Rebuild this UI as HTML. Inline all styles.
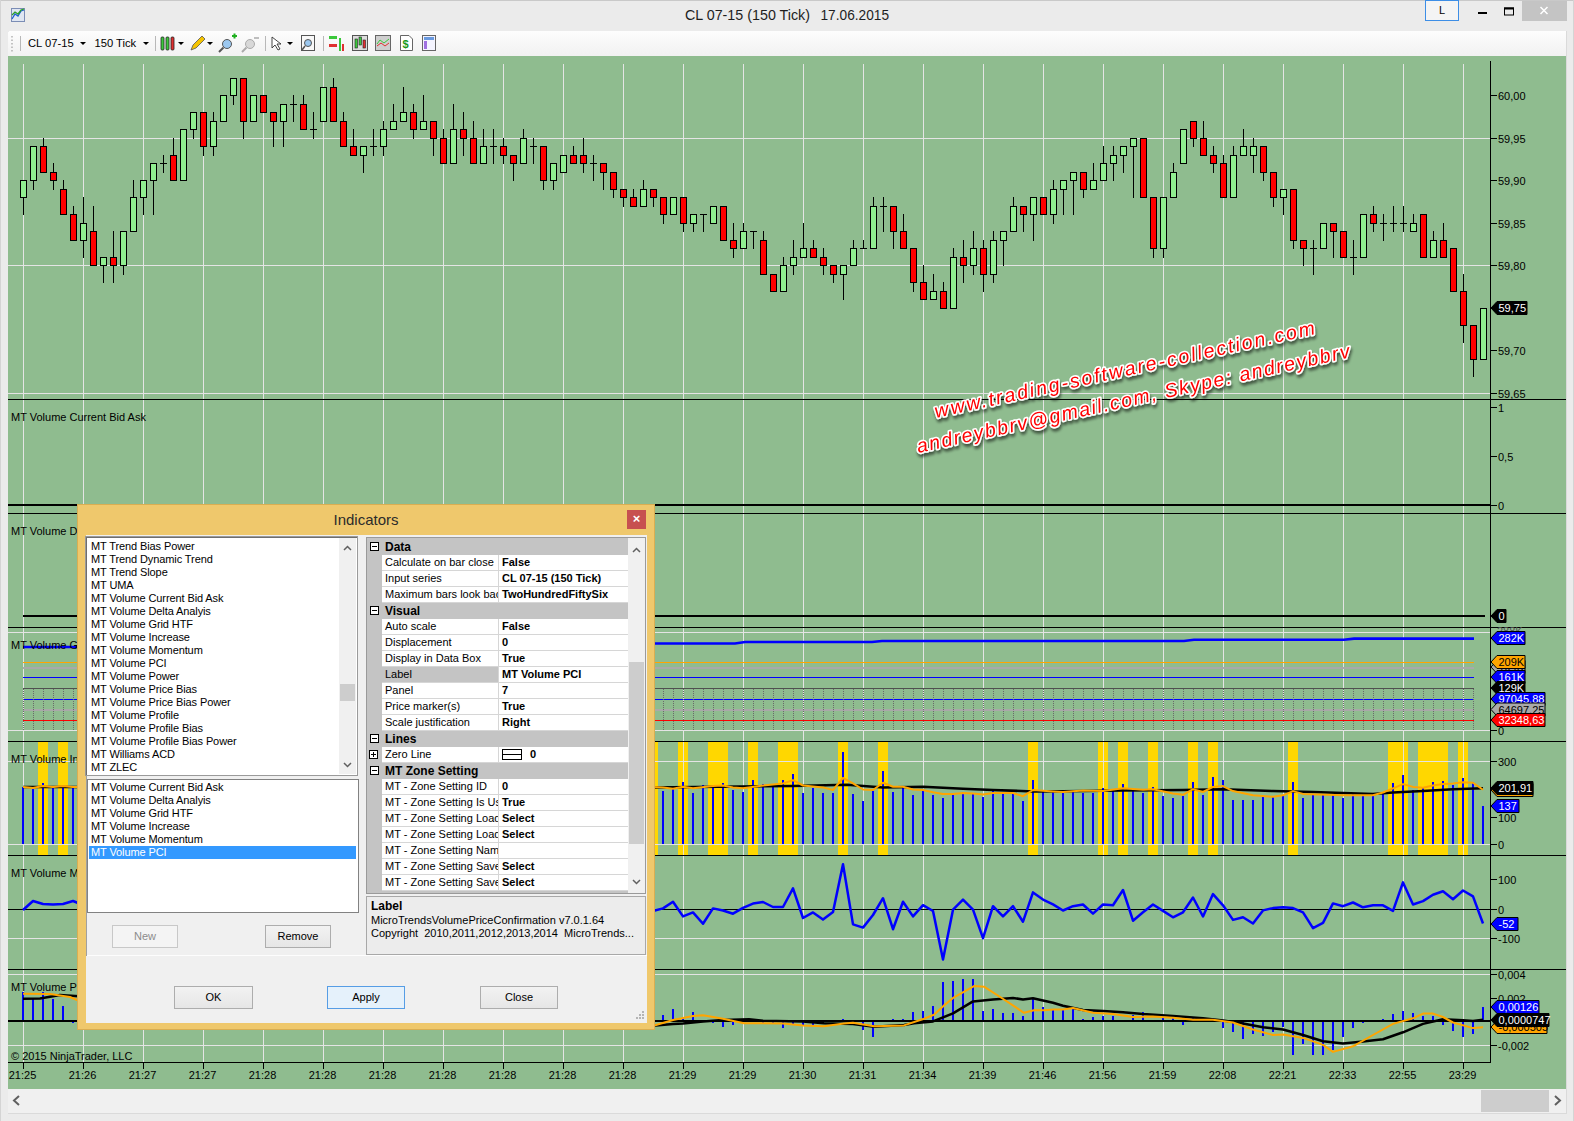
<!DOCTYPE html><html><head><meta charset="utf-8"><title>CL 07-15</title><style>
*{box-sizing:border-box}
body{margin:0;width:1574px;height:1121px;overflow:hidden;background:#ebebeb;font-family:"Liberation Sans",sans-serif;position:relative;color:#000}
.abs{position:absolute}
#dlg{position:absolute;left:77px;top:504px;width:578px;height:526px;background:#efc86c;border:1px solid #d9ae52}
#dlg .t{position:absolute;left:0;width:100%;top:6px;text-align:center;font-size:15px;color:#2b2b2b}
#cli{position:absolute;left:8px;top:30px;width:561px;height:488px;background:#f0f0f0}
.lb{position:absolute;background:#fff;border:1px solid #9a9a9a;box-shadow:inset 1px 1px 0 #6e6e6e}
.it{position:absolute;left:4px;font-size:11px;line-height:13px;height:13px;white-space:nowrap;letter-spacing:-0.1px}
.btn{position:absolute;font-size:11px;text-align:center;border:1px solid #adadad;background:linear-gradient(#f2f2f2,#e6e6e6);line-height:21px}
.pg{position:absolute;font-size:11px;white-space:nowrap;overflow:hidden}
.row{position:absolute;left:15px;width:246px;height:16px;border-bottom:1px solid #d6d6d6;background:#fff}
.row .n{position:absolute;left:3px;top:1px;line-height:14px;width:113px;overflow:hidden}
.row .v{position:absolute;left:116px;top:0;height:15px;width:129px;border-left:1px solid #d6d6d6;padding-left:3px;line-height:15px;font-weight:bold}
.cat{position:absolute;left:0;width:261px;height:16px;background:#c4c4c4;font-weight:bold;font-size:12px;line-height:16px}
.cat span{position:absolute;left:18px}
.pm{position:absolute;left:3px;top:3px;width:9px;height:9px;border:1px solid #000;background:#fff}
.pm:before{content:"";position:absolute;left:1px;top:3px;width:5px;height:1px;background:#000}
.pm.p:after{content:"";position:absolute;left:3px;top:1px;width:1px;height:5px;background:#000}

</style></head><body>
<svg class="abs" style="left:0;top:0" width="1574" height="1121" viewBox="0 0 1574 1121" shape-rendering="crispEdges">
<rect x="0" y="0" width="1574" height="1121" fill="#ebebeb"/>
<rect x="0" y="0" width="1574" height="1" fill="#c9c9c9"/>
<rect x="0" y="0" width="1" height="1121" fill="#d4d4d4"/>
<rect x="1573" y="0" width="1" height="1121" fill="#d4d4d4"/>
<defs><linearGradient id="tb" x1="0" y1="0" x2="0" y2="1"><stop offset="0" stop-color="#fdfdfd"/><stop offset="1" stop-color="#f1f1f1"/></linearGradient></defs>
<rect x="8" y="31" width="1558" height="26" rx="2" fill="url(#tb)"/>
<rect x="8" y="56" width="1558" height="1033" fill="#8fbc8f"/>
<rect x="8" y="1089" width="1558" height="24" fill="#f0f0f0"/>
<rect x="8" y="1113" width="1558" height="1" fill="#dadada"/>
<rect x="1566" y="31" width="1" height="1083" fill="#dadada"/>
<rect x="1481" y="1090" width="68" height="22" fill="#cdcdcd"/>
<path d="M19 1096 L14 1100.5 L19 1105" stroke="#606060" stroke-width="2" fill="none" shape-rendering="auto"/>
<path d="M1555 1096 L1560 1100.5 L1555 1105" stroke="#606060" stroke-width="2" fill="none" shape-rendering="auto"/>
<rect x="23" y="64" width="1" height="998" fill="#e4e4e4"/>
<rect x="83" y="64" width="1" height="998" fill="#e4e4e4"/>
<rect x="143" y="64" width="1" height="998" fill="#e4e4e4"/>
<rect x="203" y="64" width="1" height="998" fill="#e4e4e4"/>
<rect x="263" y="64" width="1" height="998" fill="#e4e4e4"/>
<rect x="323" y="64" width="1" height="998" fill="#e4e4e4"/>
<rect x="383" y="64" width="1" height="998" fill="#e4e4e4"/>
<rect x="443" y="64" width="1" height="998" fill="#e4e4e4"/>
<rect x="503" y="64" width="1" height="998" fill="#e4e4e4"/>
<rect x="563" y="64" width="1" height="998" fill="#e4e4e4"/>
<rect x="623" y="64" width="1" height="998" fill="#e4e4e4"/>
<rect x="683" y="64" width="1" height="998" fill="#e4e4e4"/>
<rect x="743" y="64" width="1" height="998" fill="#e4e4e4"/>
<rect x="803" y="64" width="1" height="998" fill="#e4e4e4"/>
<rect x="863" y="64" width="1" height="998" fill="#e4e4e4"/>
<rect x="923" y="64" width="1" height="998" fill="#e4e4e4"/>
<rect x="983" y="64" width="1" height="998" fill="#e4e4e4"/>
<rect x="1043" y="64" width="1" height="998" fill="#e4e4e4"/>
<rect x="1103" y="64" width="1" height="998" fill="#e4e4e4"/>
<rect x="1163" y="64" width="1" height="998" fill="#e4e4e4"/>
<rect x="1223" y="64" width="1" height="998" fill="#e4e4e4"/>
<rect x="1283" y="64" width="1" height="998" fill="#e4e4e4"/>
<rect x="1343" y="64" width="1" height="998" fill="#e4e4e4"/>
<rect x="1403" y="64" width="1" height="998" fill="#e4e4e4"/>
<rect x="1463" y="64" width="1" height="998" fill="#e4e4e4"/>
<rect x="8" y="138" width="1482" height="1" fill="#e4e4e4"/>
<rect x="8" y="265" width="1482" height="1" fill="#e4e4e4"/>
<rect x="8" y="393" width="1482" height="1" fill="#e4e4e4"/>
<rect x="8" y="632" width="1482" height="1" fill="#e4e4e4"/>
<rect x="8" y="730" width="1482" height="1" fill="#e4e4e4"/>
<rect x="8" y="761" width="1482" height="1" fill="#e4e4e4"/>
<rect x="8" y="844" width="1482" height="1" fill="#e4e4e4"/>
<rect x="8" y="938" width="1482" height="1" fill="#e4e4e4"/>
<rect x="8" y="974" width="1482" height="1" fill="#e4e4e4"/>
<rect x="8" y="1045" width="1482" height="1" fill="#e4e4e4"/>
<rect x="23" y="180" width="1" height="35" fill="#000"/>
<rect x="20" y="180" width="7" height="18" fill="#000"/>
<rect x="21" y="181" width="5" height="16" fill="#90ee90"/>
<rect x="33" y="146" width="1" height="44" fill="#000"/>
<rect x="30" y="146" width="7" height="35" fill="#000"/>
<rect x="31" y="147" width="5" height="33" fill="#90ee90"/>
<rect x="43" y="138" width="1" height="35" fill="#000"/>
<rect x="40" y="146" width="7" height="27" fill="#000"/>
<rect x="41" y="147" width="5" height="25" fill="#ff0000"/>
<rect x="53" y="163" width="1" height="27" fill="#000"/>
<rect x="50" y="172" width="7" height="9" fill="#000"/>
<rect x="51" y="173" width="5" height="7" fill="#ff0000"/>
<rect x="63" y="180" width="1" height="35" fill="#000"/>
<rect x="60" y="189" width="7" height="26" fill="#000"/>
<rect x="61" y="190" width="5" height="24" fill="#ff0000"/>
<rect x="73" y="206" width="1" height="35" fill="#000"/>
<rect x="70" y="214" width="7" height="27" fill="#000"/>
<rect x="71" y="215" width="5" height="25" fill="#ff0000"/>
<rect x="83" y="197" width="1" height="61" fill="#000"/>
<rect x="80" y="223" width="7" height="18" fill="#000"/>
<rect x="81" y="224" width="5" height="16" fill="#90ee90"/>
<rect x="93" y="206" width="1" height="60" fill="#000"/>
<rect x="90" y="231" width="7" height="35" fill="#000"/>
<rect x="91" y="232" width="5" height="33" fill="#ff0000"/>
<rect x="103" y="257" width="1" height="26" fill="#000"/>
<rect x="100" y="257" width="7" height="9" fill="#000"/>
<rect x="101" y="258" width="5" height="7" fill="#90ee90"/>
<rect x="113" y="231" width="1" height="52" fill="#000"/>
<rect x="110" y="257" width="7" height="9" fill="#000"/>
<rect x="111" y="258" width="5" height="7" fill="#ff0000"/>
<rect x="123" y="231" width="1" height="44" fill="#000"/>
<rect x="120" y="231" width="7" height="35" fill="#000"/>
<rect x="121" y="232" width="5" height="33" fill="#90ee90"/>
<rect x="133" y="180" width="1" height="52" fill="#000"/>
<rect x="130" y="197" width="7" height="35" fill="#000"/>
<rect x="131" y="198" width="5" height="33" fill="#90ee90"/>
<rect x="143" y="180" width="1" height="35" fill="#000"/>
<rect x="140" y="180" width="7" height="18" fill="#000"/>
<rect x="141" y="181" width="5" height="16" fill="#90ee90"/>
<rect x="153" y="163" width="1" height="52" fill="#000"/>
<rect x="150" y="163" width="7" height="18" fill="#000"/>
<rect x="151" y="164" width="5" height="16" fill="#90ee90"/>
<rect x="163" y="155" width="1" height="18" fill="#000"/>
<rect x="160" y="163" width="7" height="1" fill="#000"/>
<rect x="173" y="138" width="1" height="43" fill="#000"/>
<rect x="170" y="155" width="7" height="26" fill="#000"/>
<rect x="171" y="156" width="5" height="24" fill="#ff0000"/>
<rect x="183" y="129" width="1" height="52" fill="#000"/>
<rect x="180" y="129" width="7" height="52" fill="#000"/>
<rect x="181" y="130" width="5" height="50" fill="#90ee90"/>
<rect x="193" y="112" width="1" height="27" fill="#000"/>
<rect x="190" y="112" width="7" height="18" fill="#000"/>
<rect x="191" y="113" width="5" height="16" fill="#90ee90"/>
<rect x="203" y="112" width="1" height="44" fill="#000"/>
<rect x="200" y="112" width="7" height="35" fill="#000"/>
<rect x="201" y="113" width="5" height="33" fill="#ff0000"/>
<rect x="213" y="112" width="1" height="44" fill="#000"/>
<rect x="210" y="121" width="7" height="26" fill="#000"/>
<rect x="211" y="122" width="5" height="24" fill="#90ee90"/>
<rect x="223" y="95" width="1" height="27" fill="#000"/>
<rect x="220" y="95" width="7" height="27" fill="#000"/>
<rect x="221" y="96" width="5" height="25" fill="#90ee90"/>
<rect x="233" y="78" width="1" height="27" fill="#000"/>
<rect x="230" y="78" width="7" height="18" fill="#000"/>
<rect x="231" y="79" width="5" height="16" fill="#90ee90"/>
<rect x="243" y="78" width="1" height="61" fill="#000"/>
<rect x="240" y="78" width="7" height="44" fill="#000"/>
<rect x="241" y="79" width="5" height="42" fill="#ff0000"/>
<rect x="253" y="95" width="1" height="27" fill="#000"/>
<rect x="250" y="95" width="7" height="27" fill="#000"/>
<rect x="251" y="96" width="5" height="25" fill="#90ee90"/>
<rect x="263" y="95" width="1" height="18" fill="#000"/>
<rect x="260" y="95" width="7" height="18" fill="#000"/>
<rect x="261" y="96" width="5" height="16" fill="#ff0000"/>
<rect x="273" y="112" width="1" height="35" fill="#000"/>
<rect x="270" y="112" width="7" height="10" fill="#000"/>
<rect x="271" y="113" width="5" height="8" fill="#ff0000"/>
<rect x="283" y="104" width="1" height="43" fill="#000"/>
<rect x="280" y="104" width="7" height="18" fill="#000"/>
<rect x="281" y="105" width="5" height="16" fill="#90ee90"/>
<rect x="293" y="95" width="1" height="27" fill="#000"/>
<rect x="290" y="104" width="7" height="1" fill="#000"/>
<rect x="303" y="95" width="1" height="35" fill="#000"/>
<rect x="300" y="104" width="7" height="26" fill="#000"/>
<rect x="301" y="105" width="5" height="24" fill="#ff0000"/>
<rect x="313" y="112" width="1" height="27" fill="#000"/>
<rect x="310" y="129" width="7" height="1" fill="#000"/>
<rect x="323" y="87" width="1" height="35" fill="#000"/>
<rect x="320" y="87" width="7" height="35" fill="#000"/>
<rect x="321" y="88" width="5" height="33" fill="#90ee90"/>
<rect x="333" y="78" width="1" height="44" fill="#000"/>
<rect x="330" y="87" width="7" height="35" fill="#000"/>
<rect x="331" y="88" width="5" height="33" fill="#ff0000"/>
<rect x="343" y="112" width="1" height="35" fill="#000"/>
<rect x="340" y="121" width="7" height="26" fill="#000"/>
<rect x="341" y="122" width="5" height="24" fill="#ff0000"/>
<rect x="353" y="129" width="1" height="27" fill="#000"/>
<rect x="350" y="146" width="7" height="10" fill="#000"/>
<rect x="351" y="147" width="5" height="8" fill="#ff0000"/>
<rect x="363" y="146" width="1" height="27" fill="#000"/>
<rect x="360" y="146" width="7" height="10" fill="#000"/>
<rect x="361" y="147" width="5" height="8" fill="#90ee90"/>
<rect x="373" y="129" width="1" height="27" fill="#000"/>
<rect x="370" y="146" width="7" height="1" fill="#000"/>
<rect x="383" y="121" width="1" height="35" fill="#000"/>
<rect x="380" y="129" width="7" height="18" fill="#000"/>
<rect x="381" y="130" width="5" height="16" fill="#90ee90"/>
<rect x="393" y="104" width="1" height="26" fill="#000"/>
<rect x="390" y="121" width="7" height="9" fill="#000"/>
<rect x="391" y="122" width="5" height="7" fill="#90ee90"/>
<rect x="403" y="87" width="1" height="35" fill="#000"/>
<rect x="400" y="112" width="7" height="10" fill="#000"/>
<rect x="401" y="113" width="5" height="8" fill="#90ee90"/>
<rect x="413" y="104" width="1" height="35" fill="#000"/>
<rect x="410" y="112" width="7" height="18" fill="#000"/>
<rect x="411" y="113" width="5" height="16" fill="#ff0000"/>
<rect x="423" y="95" width="1" height="35" fill="#000"/>
<rect x="420" y="121" width="7" height="9" fill="#000"/>
<rect x="421" y="122" width="5" height="7" fill="#90ee90"/>
<rect x="433" y="121" width="1" height="35" fill="#000"/>
<rect x="430" y="121" width="7" height="18" fill="#000"/>
<rect x="431" y="122" width="5" height="16" fill="#ff0000"/>
<rect x="443" y="129" width="1" height="35" fill="#000"/>
<rect x="440" y="138" width="7" height="26" fill="#000"/>
<rect x="441" y="139" width="5" height="24" fill="#ff0000"/>
<rect x="453" y="104" width="1" height="60" fill="#000"/>
<rect x="450" y="129" width="7" height="35" fill="#000"/>
<rect x="451" y="130" width="5" height="33" fill="#90ee90"/>
<rect x="463" y="112" width="1" height="44" fill="#000"/>
<rect x="460" y="129" width="7" height="10" fill="#000"/>
<rect x="461" y="130" width="5" height="8" fill="#ff0000"/>
<rect x="473" y="121" width="1" height="43" fill="#000"/>
<rect x="470" y="138" width="7" height="26" fill="#000"/>
<rect x="471" y="139" width="5" height="24" fill="#ff0000"/>
<rect x="483" y="129" width="1" height="35" fill="#000"/>
<rect x="480" y="146" width="7" height="18" fill="#000"/>
<rect x="481" y="147" width="5" height="16" fill="#90ee90"/>
<rect x="493" y="129" width="1" height="35" fill="#000"/>
<rect x="490" y="146" width="7" height="1" fill="#000"/>
<rect x="503" y="138" width="1" height="26" fill="#000"/>
<rect x="500" y="146" width="7" height="10" fill="#000"/>
<rect x="501" y="147" width="5" height="8" fill="#ff0000"/>
<rect x="513" y="155" width="1" height="26" fill="#000"/>
<rect x="510" y="155" width="7" height="9" fill="#000"/>
<rect x="511" y="156" width="5" height="7" fill="#ff0000"/>
<rect x="523" y="129" width="1" height="35" fill="#000"/>
<rect x="520" y="138" width="7" height="26" fill="#000"/>
<rect x="521" y="139" width="5" height="24" fill="#90ee90"/>
<rect x="533" y="138" width="1" height="26" fill="#000"/>
<rect x="530" y="146" width="7" height="1" fill="#000"/>
<rect x="543" y="146" width="1" height="44" fill="#000"/>
<rect x="540" y="146" width="7" height="35" fill="#000"/>
<rect x="541" y="147" width="5" height="33" fill="#ff0000"/>
<rect x="553" y="163" width="1" height="27" fill="#000"/>
<rect x="550" y="163" width="7" height="18" fill="#000"/>
<rect x="551" y="164" width="5" height="16" fill="#90ee90"/>
<rect x="563" y="155" width="1" height="18" fill="#000"/>
<rect x="560" y="155" width="7" height="18" fill="#000"/>
<rect x="561" y="156" width="5" height="16" fill="#90ee90"/>
<rect x="573" y="146" width="1" height="18" fill="#000"/>
<rect x="570" y="155" width="7" height="9" fill="#000"/>
<rect x="571" y="156" width="5" height="7" fill="#ff0000"/>
<rect x="583" y="138" width="1" height="35" fill="#000"/>
<rect x="580" y="155" width="7" height="9" fill="#000"/>
<rect x="581" y="156" width="5" height="7" fill="#ff0000"/>
<rect x="593" y="155" width="1" height="26" fill="#000"/>
<rect x="590" y="163" width="7" height="1" fill="#000"/>
<rect x="603" y="163" width="1" height="27" fill="#000"/>
<rect x="600" y="163" width="7" height="10" fill="#000"/>
<rect x="601" y="164" width="5" height="8" fill="#ff0000"/>
<rect x="613" y="172" width="1" height="26" fill="#000"/>
<rect x="610" y="172" width="7" height="18" fill="#000"/>
<rect x="611" y="173" width="5" height="16" fill="#ff0000"/>
<rect x="623" y="189" width="1" height="18" fill="#000"/>
<rect x="620" y="189" width="7" height="9" fill="#000"/>
<rect x="621" y="190" width="5" height="7" fill="#ff0000"/>
<rect x="633" y="189" width="1" height="18" fill="#000"/>
<rect x="630" y="197" width="7" height="10" fill="#000"/>
<rect x="631" y="198" width="5" height="8" fill="#ff0000"/>
<rect x="643" y="180" width="1" height="27" fill="#000"/>
<rect x="640" y="189" width="7" height="18" fill="#000"/>
<rect x="641" y="190" width="5" height="16" fill="#90ee90"/>
<rect x="653" y="189" width="1" height="18" fill="#000"/>
<rect x="650" y="189" width="7" height="9" fill="#000"/>
<rect x="651" y="190" width="5" height="7" fill="#ff0000"/>
<rect x="663" y="197" width="1" height="27" fill="#000"/>
<rect x="660" y="197" width="7" height="18" fill="#000"/>
<rect x="661" y="198" width="5" height="16" fill="#ff0000"/>
<rect x="673" y="197" width="1" height="18" fill="#000"/>
<rect x="670" y="197" width="7" height="18" fill="#000"/>
<rect x="671" y="198" width="5" height="16" fill="#90ee90"/>
<rect x="683" y="197" width="1" height="35" fill="#000"/>
<rect x="680" y="197" width="7" height="27" fill="#000"/>
<rect x="681" y="198" width="5" height="25" fill="#ff0000"/>
<rect x="693" y="214" width="1" height="18" fill="#000"/>
<rect x="690" y="214" width="7" height="10" fill="#000"/>
<rect x="691" y="215" width="5" height="8" fill="#90ee90"/>
<rect x="703" y="214" width="1" height="18" fill="#000"/>
<rect x="700" y="214" width="7" height="1" fill="#000"/>
<rect x="713" y="206" width="1" height="18" fill="#000"/>
<rect x="710" y="206" width="7" height="18" fill="#000"/>
<rect x="711" y="207" width="5" height="16" fill="#90ee90"/>
<rect x="723" y="206" width="1" height="35" fill="#000"/>
<rect x="720" y="206" width="7" height="35" fill="#000"/>
<rect x="721" y="207" width="5" height="33" fill="#ff0000"/>
<rect x="733" y="223" width="1" height="35" fill="#000"/>
<rect x="730" y="240" width="7" height="9" fill="#000"/>
<rect x="731" y="241" width="5" height="7" fill="#ff0000"/>
<rect x="743" y="223" width="1" height="26" fill="#000"/>
<rect x="740" y="231" width="7" height="18" fill="#000"/>
<rect x="741" y="232" width="5" height="16" fill="#90ee90"/>
<rect x="753" y="231" width="1" height="18" fill="#000"/>
<rect x="750" y="231" width="7" height="1" fill="#000"/>
<rect x="763" y="231" width="1" height="44" fill="#000"/>
<rect x="760" y="240" width="7" height="35" fill="#000"/>
<rect x="761" y="241" width="5" height="33" fill="#ff0000"/>
<rect x="773" y="274" width="1" height="18" fill="#000"/>
<rect x="770" y="274" width="7" height="18" fill="#000"/>
<rect x="771" y="275" width="5" height="16" fill="#ff0000"/>
<rect x="783" y="257" width="1" height="35" fill="#000"/>
<rect x="780" y="265" width="7" height="27" fill="#000"/>
<rect x="781" y="266" width="5" height="25" fill="#90ee90"/>
<rect x="793" y="240" width="1" height="35" fill="#000"/>
<rect x="790" y="257" width="7" height="9" fill="#000"/>
<rect x="791" y="258" width="5" height="7" fill="#90ee90"/>
<rect x="803" y="223" width="1" height="35" fill="#000"/>
<rect x="800" y="248" width="7" height="10" fill="#000"/>
<rect x="801" y="249" width="5" height="8" fill="#90ee90"/>
<rect x="813" y="240" width="1" height="18" fill="#000"/>
<rect x="810" y="248" width="7" height="10" fill="#000"/>
<rect x="811" y="249" width="5" height="8" fill="#ff0000"/>
<rect x="823" y="248" width="1" height="27" fill="#000"/>
<rect x="820" y="257" width="7" height="9" fill="#000"/>
<rect x="821" y="258" width="5" height="7" fill="#ff0000"/>
<rect x="833" y="265" width="1" height="18" fill="#000"/>
<rect x="830" y="265" width="7" height="10" fill="#000"/>
<rect x="831" y="266" width="5" height="8" fill="#ff0000"/>
<rect x="843" y="265" width="1" height="35" fill="#000"/>
<rect x="840" y="265" width="7" height="10" fill="#000"/>
<rect x="841" y="266" width="5" height="8" fill="#90ee90"/>
<rect x="853" y="240" width="1" height="26" fill="#000"/>
<rect x="850" y="248" width="7" height="18" fill="#000"/>
<rect x="851" y="249" width="5" height="16" fill="#90ee90"/>
<rect x="863" y="240" width="1" height="9" fill="#000"/>
<rect x="860" y="248" width="7" height="1" fill="#000"/>
<rect x="873" y="197" width="1" height="52" fill="#000"/>
<rect x="870" y="206" width="7" height="43" fill="#000"/>
<rect x="871" y="207" width="5" height="41" fill="#90ee90"/>
<rect x="883" y="197" width="1" height="35" fill="#000"/>
<rect x="880" y="206" width="7" height="1" fill="#000"/>
<rect x="893" y="206" width="1" height="43" fill="#000"/>
<rect x="890" y="206" width="7" height="26" fill="#000"/>
<rect x="891" y="207" width="5" height="24" fill="#ff0000"/>
<rect x="903" y="214" width="1" height="35" fill="#000"/>
<rect x="900" y="231" width="7" height="18" fill="#000"/>
<rect x="901" y="232" width="5" height="16" fill="#ff0000"/>
<rect x="913" y="248" width="1" height="44" fill="#000"/>
<rect x="910" y="248" width="7" height="35" fill="#000"/>
<rect x="911" y="249" width="5" height="33" fill="#ff0000"/>
<rect x="923" y="265" width="1" height="35" fill="#000"/>
<rect x="920" y="282" width="7" height="18" fill="#000"/>
<rect x="921" y="283" width="5" height="16" fill="#ff0000"/>
<rect x="933" y="274" width="1" height="26" fill="#000"/>
<rect x="930" y="291" width="7" height="9" fill="#000"/>
<rect x="931" y="292" width="5" height="7" fill="#90ee90"/>
<rect x="943" y="282" width="1" height="27" fill="#000"/>
<rect x="940" y="291" width="7" height="18" fill="#000"/>
<rect x="941" y="292" width="5" height="16" fill="#ff0000"/>
<rect x="953" y="248" width="1" height="61" fill="#000"/>
<rect x="950" y="257" width="7" height="52" fill="#000"/>
<rect x="951" y="258" width="5" height="50" fill="#90ee90"/>
<rect x="963" y="240" width="1" height="43" fill="#000"/>
<rect x="960" y="257" width="7" height="9" fill="#000"/>
<rect x="961" y="258" width="5" height="7" fill="#ff0000"/>
<rect x="973" y="231" width="1" height="44" fill="#000"/>
<rect x="970" y="248" width="7" height="18" fill="#000"/>
<rect x="971" y="249" width="5" height="16" fill="#90ee90"/>
<rect x="983" y="240" width="1" height="52" fill="#000"/>
<rect x="980" y="248" width="7" height="27" fill="#000"/>
<rect x="981" y="249" width="5" height="25" fill="#ff0000"/>
<rect x="993" y="231" width="1" height="52" fill="#000"/>
<rect x="990" y="240" width="7" height="35" fill="#000"/>
<rect x="991" y="241" width="5" height="33" fill="#90ee90"/>
<rect x="1003" y="231" width="1" height="35" fill="#000"/>
<rect x="1000" y="231" width="7" height="10" fill="#000"/>
<rect x="1001" y="232" width="5" height="8" fill="#90ee90"/>
<rect x="1013" y="197" width="1" height="35" fill="#000"/>
<rect x="1010" y="206" width="7" height="26" fill="#000"/>
<rect x="1011" y="207" width="5" height="24" fill="#90ee90"/>
<rect x="1023" y="206" width="1" height="26" fill="#000"/>
<rect x="1020" y="206" width="7" height="9" fill="#000"/>
<rect x="1021" y="207" width="5" height="7" fill="#ff0000"/>
<rect x="1033" y="197" width="1" height="44" fill="#000"/>
<rect x="1030" y="197" width="7" height="18" fill="#000"/>
<rect x="1031" y="198" width="5" height="16" fill="#90ee90"/>
<rect x="1043" y="197" width="1" height="18" fill="#000"/>
<rect x="1040" y="197" width="7" height="18" fill="#000"/>
<rect x="1041" y="198" width="5" height="16" fill="#ff0000"/>
<rect x="1053" y="180" width="1" height="44" fill="#000"/>
<rect x="1050" y="189" width="7" height="26" fill="#000"/>
<rect x="1051" y="190" width="5" height="24" fill="#90ee90"/>
<rect x="1063" y="180" width="1" height="35" fill="#000"/>
<rect x="1060" y="180" width="7" height="10" fill="#000"/>
<rect x="1061" y="181" width="5" height="8" fill="#90ee90"/>
<rect x="1073" y="172" width="1" height="43" fill="#000"/>
<rect x="1070" y="172" width="7" height="9" fill="#000"/>
<rect x="1071" y="173" width="5" height="7" fill="#90ee90"/>
<rect x="1083" y="172" width="1" height="26" fill="#000"/>
<rect x="1080" y="172" width="7" height="18" fill="#000"/>
<rect x="1081" y="173" width="5" height="16" fill="#ff0000"/>
<rect x="1093" y="163" width="1" height="27" fill="#000"/>
<rect x="1090" y="180" width="7" height="10" fill="#000"/>
<rect x="1091" y="181" width="5" height="8" fill="#90ee90"/>
<rect x="1103" y="146" width="1" height="35" fill="#000"/>
<rect x="1100" y="163" width="7" height="18" fill="#000"/>
<rect x="1101" y="164" width="5" height="16" fill="#90ee90"/>
<rect x="1113" y="146" width="1" height="35" fill="#000"/>
<rect x="1110" y="155" width="7" height="9" fill="#000"/>
<rect x="1111" y="156" width="5" height="7" fill="#90ee90"/>
<rect x="1123" y="146" width="1" height="27" fill="#000"/>
<rect x="1120" y="146" width="7" height="10" fill="#000"/>
<rect x="1121" y="147" width="5" height="8" fill="#90ee90"/>
<rect x="1133" y="138" width="1" height="60" fill="#000"/>
<rect x="1130" y="138" width="7" height="9" fill="#000"/>
<rect x="1131" y="139" width="5" height="7" fill="#90ee90"/>
<rect x="1143" y="138" width="1" height="60" fill="#000"/>
<rect x="1140" y="138" width="7" height="60" fill="#000"/>
<rect x="1141" y="139" width="5" height="58" fill="#ff0000"/>
<rect x="1153" y="197" width="1" height="61" fill="#000"/>
<rect x="1150" y="197" width="7" height="52" fill="#000"/>
<rect x="1151" y="198" width="5" height="50" fill="#ff0000"/>
<rect x="1163" y="197" width="1" height="61" fill="#000"/>
<rect x="1160" y="197" width="7" height="52" fill="#000"/>
<rect x="1161" y="198" width="5" height="50" fill="#90ee90"/>
<rect x="1173" y="163" width="1" height="35" fill="#000"/>
<rect x="1170" y="172" width="7" height="26" fill="#000"/>
<rect x="1171" y="173" width="5" height="24" fill="#90ee90"/>
<rect x="1183" y="129" width="1" height="35" fill="#000"/>
<rect x="1180" y="129" width="7" height="35" fill="#000"/>
<rect x="1181" y="130" width="5" height="33" fill="#90ee90"/>
<rect x="1193" y="121" width="1" height="26" fill="#000"/>
<rect x="1190" y="121" width="7" height="18" fill="#000"/>
<rect x="1191" y="122" width="5" height="16" fill="#ff0000"/>
<rect x="1203" y="121" width="1" height="35" fill="#000"/>
<rect x="1200" y="138" width="7" height="18" fill="#000"/>
<rect x="1201" y="139" width="5" height="16" fill="#ff0000"/>
<rect x="1213" y="146" width="1" height="27" fill="#000"/>
<rect x="1210" y="155" width="7" height="9" fill="#000"/>
<rect x="1211" y="156" width="5" height="7" fill="#ff0000"/>
<rect x="1223" y="155" width="1" height="43" fill="#000"/>
<rect x="1220" y="163" width="7" height="35" fill="#000"/>
<rect x="1221" y="164" width="5" height="33" fill="#ff0000"/>
<rect x="1233" y="146" width="1" height="52" fill="#000"/>
<rect x="1230" y="155" width="7" height="43" fill="#000"/>
<rect x="1231" y="156" width="5" height="41" fill="#90ee90"/>
<rect x="1243" y="129" width="1" height="27" fill="#000"/>
<rect x="1240" y="146" width="7" height="10" fill="#000"/>
<rect x="1241" y="147" width="5" height="8" fill="#90ee90"/>
<rect x="1253" y="138" width="1" height="35" fill="#000"/>
<rect x="1250" y="146" width="7" height="10" fill="#000"/>
<rect x="1251" y="147" width="5" height="8" fill="#90ee90"/>
<rect x="1263" y="146" width="1" height="35" fill="#000"/>
<rect x="1260" y="146" width="7" height="27" fill="#000"/>
<rect x="1261" y="147" width="5" height="25" fill="#ff0000"/>
<rect x="1273" y="172" width="1" height="35" fill="#000"/>
<rect x="1270" y="172" width="7" height="26" fill="#000"/>
<rect x="1271" y="173" width="5" height="24" fill="#ff0000"/>
<rect x="1283" y="189" width="1" height="26" fill="#000"/>
<rect x="1280" y="189" width="7" height="9" fill="#000"/>
<rect x="1281" y="190" width="5" height="7" fill="#90ee90"/>
<rect x="1293" y="189" width="1" height="60" fill="#000"/>
<rect x="1290" y="189" width="7" height="52" fill="#000"/>
<rect x="1291" y="190" width="5" height="50" fill="#ff0000"/>
<rect x="1303" y="240" width="1" height="26" fill="#000"/>
<rect x="1300" y="240" width="7" height="9" fill="#000"/>
<rect x="1301" y="241" width="5" height="7" fill="#ff0000"/>
<rect x="1313" y="240" width="1" height="35" fill="#000"/>
<rect x="1310" y="248" width="7" height="1" fill="#000"/>
<rect x="1323" y="223" width="1" height="26" fill="#000"/>
<rect x="1320" y="223" width="7" height="26" fill="#000"/>
<rect x="1321" y="224" width="5" height="24" fill="#90ee90"/>
<rect x="1333" y="223" width="1" height="35" fill="#000"/>
<rect x="1330" y="223" width="7" height="9" fill="#000"/>
<rect x="1331" y="224" width="5" height="7" fill="#ff0000"/>
<rect x="1343" y="231" width="1" height="27" fill="#000"/>
<rect x="1340" y="231" width="7" height="27" fill="#000"/>
<rect x="1341" y="232" width="5" height="25" fill="#ff0000"/>
<rect x="1353" y="240" width="1" height="35" fill="#000"/>
<rect x="1350" y="257" width="7" height="1" fill="#000"/>
<rect x="1363" y="214" width="1" height="44" fill="#000"/>
<rect x="1360" y="214" width="7" height="44" fill="#000"/>
<rect x="1361" y="215" width="5" height="42" fill="#90ee90"/>
<rect x="1373" y="206" width="1" height="26" fill="#000"/>
<rect x="1370" y="214" width="7" height="10" fill="#000"/>
<rect x="1371" y="215" width="5" height="8" fill="#ff0000"/>
<rect x="1383" y="214" width="1" height="27" fill="#000"/>
<rect x="1380" y="223" width="7" height="1" fill="#000"/>
<rect x="1393" y="206" width="1" height="26" fill="#000"/>
<rect x="1390" y="223" width="7" height="1" fill="#000"/>
<rect x="1403" y="206" width="1" height="26" fill="#000"/>
<rect x="1400" y="223" width="7" height="1" fill="#000"/>
<rect x="1413" y="214" width="1" height="18" fill="#000"/>
<rect x="1410" y="223" width="7" height="9" fill="#000"/>
<rect x="1411" y="224" width="5" height="7" fill="#90ee90"/>
<rect x="1423" y="214" width="1" height="44" fill="#000"/>
<rect x="1420" y="214" width="7" height="44" fill="#000"/>
<rect x="1421" y="215" width="5" height="42" fill="#ff0000"/>
<rect x="1433" y="231" width="1" height="27" fill="#000"/>
<rect x="1430" y="240" width="7" height="18" fill="#000"/>
<rect x="1431" y="241" width="5" height="16" fill="#90ee90"/>
<rect x="1443" y="223" width="1" height="35" fill="#000"/>
<rect x="1440" y="240" width="7" height="18" fill="#000"/>
<rect x="1441" y="241" width="5" height="16" fill="#ff0000"/>
<rect x="1453" y="248" width="1" height="44" fill="#000"/>
<rect x="1450" y="248" width="7" height="44" fill="#000"/>
<rect x="1451" y="249" width="5" height="42" fill="#ff0000"/>
<rect x="1463" y="274" width="1" height="69" fill="#000"/>
<rect x="1460" y="291" width="7" height="35" fill="#000"/>
<rect x="1461" y="292" width="5" height="33" fill="#ff0000"/>
<rect x="1473" y="325" width="1" height="52" fill="#000"/>
<rect x="1470" y="325" width="7" height="35" fill="#000"/>
<rect x="1471" y="326" width="5" height="33" fill="#ff0000"/>
<rect x="1483" y="308" width="1" height="52" fill="#000"/>
<rect x="1480" y="308" width="7" height="52" fill="#000"/>
<rect x="1481" y="309" width="5" height="50" fill="#90ee90"/>
<g shape-rendering="crispEdges">
<polyline points="23,647 300,647 310,645 500,645 510,643.5 735,643.5 745,642 872,642 882,641 1184,641 1194,639.8 1344,639.8 1354,638.6 1474,638.6" stroke="#0000ff" stroke-width="2.6" fill="none" shape-rendering="auto"/>
<rect x="23" y="662" width="1451" height="1" fill="#ffa500"/>
<rect x="23" y="667" width="1451" height="2" fill="#a9a9a9"/>
<rect x="23" y="677" width="1451" height="1" fill="#0000ff"/>
<rect x="23" y="688" width="1451" height="1" fill="#505050"/>
<rect x="23" y="699" width="1451" height="1" fill="#0000ff"/>
<rect x="23" y="709" width="1451" height="2" fill="#a9a9a9"/>
<rect x="23" y="720" width="1451" height="1" fill="#ff0000"/>
<line x1="23.5" y1="689" x2="23.5" y2="731" stroke="#6a6a6a" stroke-width="1" stroke-dasharray="1,1"/>
<line x1="33.5" y1="689" x2="33.5" y2="731" stroke="#6a6a6a" stroke-width="1" stroke-dasharray="1,1"/>
<line x1="43.5" y1="689" x2="43.5" y2="731" stroke="#6a6a6a" stroke-width="1" stroke-dasharray="1,1"/>
<line x1="53.5" y1="689" x2="53.5" y2="731" stroke="#6a6a6a" stroke-width="1" stroke-dasharray="1,1"/>
<line x1="63.5" y1="689" x2="63.5" y2="731" stroke="#6a6a6a" stroke-width="1" stroke-dasharray="1,1"/>
<line x1="73.5" y1="689" x2="73.5" y2="731" stroke="#6a6a6a" stroke-width="1" stroke-dasharray="1,1"/>
<line x1="83.5" y1="689" x2="83.5" y2="731" stroke="#6a6a6a" stroke-width="1" stroke-dasharray="1,1"/>
<line x1="93.5" y1="689" x2="93.5" y2="731" stroke="#6a6a6a" stroke-width="1" stroke-dasharray="1,1"/>
<line x1="103.5" y1="689" x2="103.5" y2="731" stroke="#6a6a6a" stroke-width="1" stroke-dasharray="1,1"/>
<line x1="113.5" y1="689" x2="113.5" y2="731" stroke="#6a6a6a" stroke-width="1" stroke-dasharray="1,1"/>
<line x1="123.5" y1="689" x2="123.5" y2="731" stroke="#6a6a6a" stroke-width="1" stroke-dasharray="1,1"/>
<line x1="133.5" y1="689" x2="133.5" y2="731" stroke="#6a6a6a" stroke-width="1" stroke-dasharray="1,1"/>
<line x1="143.5" y1="689" x2="143.5" y2="731" stroke="#6a6a6a" stroke-width="1" stroke-dasharray="1,1"/>
<line x1="153.5" y1="689" x2="153.5" y2="731" stroke="#6a6a6a" stroke-width="1" stroke-dasharray="1,1"/>
<line x1="163.5" y1="689" x2="163.5" y2="731" stroke="#6a6a6a" stroke-width="1" stroke-dasharray="1,1"/>
<line x1="173.5" y1="689" x2="173.5" y2="731" stroke="#6a6a6a" stroke-width="1" stroke-dasharray="1,1"/>
<line x1="183.5" y1="689" x2="183.5" y2="731" stroke="#6a6a6a" stroke-width="1" stroke-dasharray="1,1"/>
<line x1="193.5" y1="689" x2="193.5" y2="731" stroke="#6a6a6a" stroke-width="1" stroke-dasharray="1,1"/>
<line x1="203.5" y1="689" x2="203.5" y2="731" stroke="#6a6a6a" stroke-width="1" stroke-dasharray="1,1"/>
<line x1="213.5" y1="689" x2="213.5" y2="731" stroke="#6a6a6a" stroke-width="1" stroke-dasharray="1,1"/>
<line x1="223.5" y1="689" x2="223.5" y2="731" stroke="#6a6a6a" stroke-width="1" stroke-dasharray="1,1"/>
<line x1="233.5" y1="689" x2="233.5" y2="731" stroke="#6a6a6a" stroke-width="1" stroke-dasharray="1,1"/>
<line x1="243.5" y1="689" x2="243.5" y2="731" stroke="#6a6a6a" stroke-width="1" stroke-dasharray="1,1"/>
<line x1="253.5" y1="689" x2="253.5" y2="731" stroke="#6a6a6a" stroke-width="1" stroke-dasharray="1,1"/>
<line x1="263.5" y1="689" x2="263.5" y2="731" stroke="#6a6a6a" stroke-width="1" stroke-dasharray="1,1"/>
<line x1="273.5" y1="689" x2="273.5" y2="731" stroke="#6a6a6a" stroke-width="1" stroke-dasharray="1,1"/>
<line x1="283.5" y1="689" x2="283.5" y2="731" stroke="#6a6a6a" stroke-width="1" stroke-dasharray="1,1"/>
<line x1="293.5" y1="689" x2="293.5" y2="731" stroke="#6a6a6a" stroke-width="1" stroke-dasharray="1,1"/>
<line x1="303.5" y1="689" x2="303.5" y2="731" stroke="#6a6a6a" stroke-width="1" stroke-dasharray="1,1"/>
<line x1="313.5" y1="689" x2="313.5" y2="731" stroke="#6a6a6a" stroke-width="1" stroke-dasharray="1,1"/>
<line x1="323.5" y1="689" x2="323.5" y2="731" stroke="#6a6a6a" stroke-width="1" stroke-dasharray="1,1"/>
<line x1="333.5" y1="689" x2="333.5" y2="731" stroke="#6a6a6a" stroke-width="1" stroke-dasharray="1,1"/>
<line x1="343.5" y1="689" x2="343.5" y2="731" stroke="#6a6a6a" stroke-width="1" stroke-dasharray="1,1"/>
<line x1="353.5" y1="689" x2="353.5" y2="731" stroke="#6a6a6a" stroke-width="1" stroke-dasharray="1,1"/>
<line x1="363.5" y1="689" x2="363.5" y2="731" stroke="#6a6a6a" stroke-width="1" stroke-dasharray="1,1"/>
<line x1="373.5" y1="689" x2="373.5" y2="731" stroke="#6a6a6a" stroke-width="1" stroke-dasharray="1,1"/>
<line x1="383.5" y1="689" x2="383.5" y2="731" stroke="#6a6a6a" stroke-width="1" stroke-dasharray="1,1"/>
<line x1="393.5" y1="689" x2="393.5" y2="731" stroke="#6a6a6a" stroke-width="1" stroke-dasharray="1,1"/>
<line x1="403.5" y1="689" x2="403.5" y2="731" stroke="#6a6a6a" stroke-width="1" stroke-dasharray="1,1"/>
<line x1="413.5" y1="689" x2="413.5" y2="731" stroke="#6a6a6a" stroke-width="1" stroke-dasharray="1,1"/>
<line x1="423.5" y1="689" x2="423.5" y2="731" stroke="#6a6a6a" stroke-width="1" stroke-dasharray="1,1"/>
<line x1="433.5" y1="689" x2="433.5" y2="731" stroke="#6a6a6a" stroke-width="1" stroke-dasharray="1,1"/>
<line x1="443.5" y1="689" x2="443.5" y2="731" stroke="#6a6a6a" stroke-width="1" stroke-dasharray="1,1"/>
<line x1="453.5" y1="689" x2="453.5" y2="731" stroke="#6a6a6a" stroke-width="1" stroke-dasharray="1,1"/>
<line x1="463.5" y1="689" x2="463.5" y2="731" stroke="#6a6a6a" stroke-width="1" stroke-dasharray="1,1"/>
<line x1="473.5" y1="689" x2="473.5" y2="731" stroke="#6a6a6a" stroke-width="1" stroke-dasharray="1,1"/>
<line x1="483.5" y1="689" x2="483.5" y2="731" stroke="#6a6a6a" stroke-width="1" stroke-dasharray="1,1"/>
<line x1="493.5" y1="689" x2="493.5" y2="731" stroke="#6a6a6a" stroke-width="1" stroke-dasharray="1,1"/>
<line x1="503.5" y1="689" x2="503.5" y2="731" stroke="#6a6a6a" stroke-width="1" stroke-dasharray="1,1"/>
<line x1="513.5" y1="689" x2="513.5" y2="731" stroke="#6a6a6a" stroke-width="1" stroke-dasharray="1,1"/>
<line x1="523.5" y1="689" x2="523.5" y2="731" stroke="#6a6a6a" stroke-width="1" stroke-dasharray="1,1"/>
<line x1="533.5" y1="689" x2="533.5" y2="731" stroke="#6a6a6a" stroke-width="1" stroke-dasharray="1,1"/>
<line x1="543.5" y1="689" x2="543.5" y2="731" stroke="#6a6a6a" stroke-width="1" stroke-dasharray="1,1"/>
<line x1="553.5" y1="689" x2="553.5" y2="731" stroke="#6a6a6a" stroke-width="1" stroke-dasharray="1,1"/>
<line x1="563.5" y1="689" x2="563.5" y2="731" stroke="#6a6a6a" stroke-width="1" stroke-dasharray="1,1"/>
<line x1="573.5" y1="689" x2="573.5" y2="731" stroke="#6a6a6a" stroke-width="1" stroke-dasharray="1,1"/>
<line x1="583.5" y1="689" x2="583.5" y2="731" stroke="#6a6a6a" stroke-width="1" stroke-dasharray="1,1"/>
<line x1="593.5" y1="689" x2="593.5" y2="731" stroke="#6a6a6a" stroke-width="1" stroke-dasharray="1,1"/>
<line x1="603.5" y1="689" x2="603.5" y2="731" stroke="#6a6a6a" stroke-width="1" stroke-dasharray="1,1"/>
<line x1="613.5" y1="689" x2="613.5" y2="731" stroke="#6a6a6a" stroke-width="1" stroke-dasharray="1,1"/>
<line x1="623.5" y1="689" x2="623.5" y2="731" stroke="#6a6a6a" stroke-width="1" stroke-dasharray="1,1"/>
<line x1="633.5" y1="689" x2="633.5" y2="731" stroke="#6a6a6a" stroke-width="1" stroke-dasharray="1,1"/>
<line x1="643.5" y1="689" x2="643.5" y2="731" stroke="#6a6a6a" stroke-width="1" stroke-dasharray="1,1"/>
<line x1="653.5" y1="689" x2="653.5" y2="731" stroke="#6a6a6a" stroke-width="1" stroke-dasharray="1,1"/>
<line x1="663.5" y1="689" x2="663.5" y2="731" stroke="#6a6a6a" stroke-width="1" stroke-dasharray="1,1"/>
<line x1="673.5" y1="689" x2="673.5" y2="731" stroke="#6a6a6a" stroke-width="1" stroke-dasharray="1,1"/>
<line x1="683.5" y1="689" x2="683.5" y2="731" stroke="#6a6a6a" stroke-width="1" stroke-dasharray="1,1"/>
<line x1="693.5" y1="689" x2="693.5" y2="731" stroke="#6a6a6a" stroke-width="1" stroke-dasharray="1,1"/>
<line x1="703.5" y1="689" x2="703.5" y2="731" stroke="#6a6a6a" stroke-width="1" stroke-dasharray="1,1"/>
<line x1="713.5" y1="689" x2="713.5" y2="731" stroke="#6a6a6a" stroke-width="1" stroke-dasharray="1,1"/>
<line x1="723.5" y1="689" x2="723.5" y2="731" stroke="#6a6a6a" stroke-width="1" stroke-dasharray="1,1"/>
<line x1="733.5" y1="689" x2="733.5" y2="731" stroke="#6a6a6a" stroke-width="1" stroke-dasharray="1,1"/>
<line x1="743.5" y1="689" x2="743.5" y2="731" stroke="#6a6a6a" stroke-width="1" stroke-dasharray="1,1"/>
<line x1="753.5" y1="689" x2="753.5" y2="731" stroke="#6a6a6a" stroke-width="1" stroke-dasharray="1,1"/>
<line x1="763.5" y1="689" x2="763.5" y2="731" stroke="#6a6a6a" stroke-width="1" stroke-dasharray="1,1"/>
<line x1="773.5" y1="689" x2="773.5" y2="731" stroke="#6a6a6a" stroke-width="1" stroke-dasharray="1,1"/>
<line x1="783.5" y1="689" x2="783.5" y2="731" stroke="#6a6a6a" stroke-width="1" stroke-dasharray="1,1"/>
<line x1="793.5" y1="689" x2="793.5" y2="731" stroke="#6a6a6a" stroke-width="1" stroke-dasharray="1,1"/>
<line x1="803.5" y1="689" x2="803.5" y2="731" stroke="#6a6a6a" stroke-width="1" stroke-dasharray="1,1"/>
<line x1="813.5" y1="689" x2="813.5" y2="731" stroke="#6a6a6a" stroke-width="1" stroke-dasharray="1,1"/>
<line x1="823.5" y1="689" x2="823.5" y2="731" stroke="#6a6a6a" stroke-width="1" stroke-dasharray="1,1"/>
<line x1="833.5" y1="689" x2="833.5" y2="731" stroke="#6a6a6a" stroke-width="1" stroke-dasharray="1,1"/>
<line x1="843.5" y1="689" x2="843.5" y2="731" stroke="#6a6a6a" stroke-width="1" stroke-dasharray="1,1"/>
<line x1="853.5" y1="689" x2="853.5" y2="731" stroke="#6a6a6a" stroke-width="1" stroke-dasharray="1,1"/>
<line x1="863.5" y1="689" x2="863.5" y2="731" stroke="#6a6a6a" stroke-width="1" stroke-dasharray="1,1"/>
<line x1="873.5" y1="689" x2="873.5" y2="731" stroke="#6a6a6a" stroke-width="1" stroke-dasharray="1,1"/>
<line x1="883.5" y1="689" x2="883.5" y2="731" stroke="#6a6a6a" stroke-width="1" stroke-dasharray="1,1"/>
<line x1="893.5" y1="689" x2="893.5" y2="731" stroke="#6a6a6a" stroke-width="1" stroke-dasharray="1,1"/>
<line x1="903.5" y1="689" x2="903.5" y2="731" stroke="#6a6a6a" stroke-width="1" stroke-dasharray="1,1"/>
<line x1="913.5" y1="689" x2="913.5" y2="731" stroke="#6a6a6a" stroke-width="1" stroke-dasharray="1,1"/>
<line x1="923.5" y1="689" x2="923.5" y2="731" stroke="#6a6a6a" stroke-width="1" stroke-dasharray="1,1"/>
<line x1="933.5" y1="689" x2="933.5" y2="731" stroke="#6a6a6a" stroke-width="1" stroke-dasharray="1,1"/>
<line x1="943.5" y1="689" x2="943.5" y2="731" stroke="#6a6a6a" stroke-width="1" stroke-dasharray="1,1"/>
<line x1="953.5" y1="689" x2="953.5" y2="731" stroke="#6a6a6a" stroke-width="1" stroke-dasharray="1,1"/>
<line x1="963.5" y1="689" x2="963.5" y2="731" stroke="#6a6a6a" stroke-width="1" stroke-dasharray="1,1"/>
<line x1="973.5" y1="689" x2="973.5" y2="731" stroke="#6a6a6a" stroke-width="1" stroke-dasharray="1,1"/>
<line x1="983.5" y1="689" x2="983.5" y2="731" stroke="#6a6a6a" stroke-width="1" stroke-dasharray="1,1"/>
<line x1="993.5" y1="689" x2="993.5" y2="731" stroke="#6a6a6a" stroke-width="1" stroke-dasharray="1,1"/>
<line x1="1003.5" y1="689" x2="1003.5" y2="731" stroke="#6a6a6a" stroke-width="1" stroke-dasharray="1,1"/>
<line x1="1013.5" y1="689" x2="1013.5" y2="731" stroke="#6a6a6a" stroke-width="1" stroke-dasharray="1,1"/>
<line x1="1023.5" y1="689" x2="1023.5" y2="731" stroke="#6a6a6a" stroke-width="1" stroke-dasharray="1,1"/>
<line x1="1033.5" y1="689" x2="1033.5" y2="731" stroke="#6a6a6a" stroke-width="1" stroke-dasharray="1,1"/>
<line x1="1043.5" y1="689" x2="1043.5" y2="731" stroke="#6a6a6a" stroke-width="1" stroke-dasharray="1,1"/>
<line x1="1053.5" y1="689" x2="1053.5" y2="731" stroke="#6a6a6a" stroke-width="1" stroke-dasharray="1,1"/>
<line x1="1063.5" y1="689" x2="1063.5" y2="731" stroke="#6a6a6a" stroke-width="1" stroke-dasharray="1,1"/>
<line x1="1073.5" y1="689" x2="1073.5" y2="731" stroke="#6a6a6a" stroke-width="1" stroke-dasharray="1,1"/>
<line x1="1083.5" y1="689" x2="1083.5" y2="731" stroke="#6a6a6a" stroke-width="1" stroke-dasharray="1,1"/>
<line x1="1093.5" y1="689" x2="1093.5" y2="731" stroke="#6a6a6a" stroke-width="1" stroke-dasharray="1,1"/>
<line x1="1103.5" y1="689" x2="1103.5" y2="731" stroke="#6a6a6a" stroke-width="1" stroke-dasharray="1,1"/>
<line x1="1113.5" y1="689" x2="1113.5" y2="731" stroke="#6a6a6a" stroke-width="1" stroke-dasharray="1,1"/>
<line x1="1123.5" y1="689" x2="1123.5" y2="731" stroke="#6a6a6a" stroke-width="1" stroke-dasharray="1,1"/>
<line x1="1133.5" y1="689" x2="1133.5" y2="731" stroke="#6a6a6a" stroke-width="1" stroke-dasharray="1,1"/>
<line x1="1143.5" y1="689" x2="1143.5" y2="731" stroke="#6a6a6a" stroke-width="1" stroke-dasharray="1,1"/>
<line x1="1153.5" y1="689" x2="1153.5" y2="731" stroke="#6a6a6a" stroke-width="1" stroke-dasharray="1,1"/>
<line x1="1163.5" y1="689" x2="1163.5" y2="731" stroke="#6a6a6a" stroke-width="1" stroke-dasharray="1,1"/>
<line x1="1173.5" y1="689" x2="1173.5" y2="731" stroke="#6a6a6a" stroke-width="1" stroke-dasharray="1,1"/>
<line x1="1183.5" y1="689" x2="1183.5" y2="731" stroke="#6a6a6a" stroke-width="1" stroke-dasharray="1,1"/>
<line x1="1193.5" y1="689" x2="1193.5" y2="731" stroke="#6a6a6a" stroke-width="1" stroke-dasharray="1,1"/>
<line x1="1203.5" y1="689" x2="1203.5" y2="731" stroke="#6a6a6a" stroke-width="1" stroke-dasharray="1,1"/>
<line x1="1213.5" y1="689" x2="1213.5" y2="731" stroke="#6a6a6a" stroke-width="1" stroke-dasharray="1,1"/>
<line x1="1223.5" y1="689" x2="1223.5" y2="731" stroke="#6a6a6a" stroke-width="1" stroke-dasharray="1,1"/>
<line x1="1233.5" y1="689" x2="1233.5" y2="731" stroke="#6a6a6a" stroke-width="1" stroke-dasharray="1,1"/>
<line x1="1243.5" y1="689" x2="1243.5" y2="731" stroke="#6a6a6a" stroke-width="1" stroke-dasharray="1,1"/>
<line x1="1253.5" y1="689" x2="1253.5" y2="731" stroke="#6a6a6a" stroke-width="1" stroke-dasharray="1,1"/>
<line x1="1263.5" y1="689" x2="1263.5" y2="731" stroke="#6a6a6a" stroke-width="1" stroke-dasharray="1,1"/>
<line x1="1273.5" y1="689" x2="1273.5" y2="731" stroke="#6a6a6a" stroke-width="1" stroke-dasharray="1,1"/>
<line x1="1283.5" y1="689" x2="1283.5" y2="731" stroke="#6a6a6a" stroke-width="1" stroke-dasharray="1,1"/>
<line x1="1293.5" y1="689" x2="1293.5" y2="731" stroke="#6a6a6a" stroke-width="1" stroke-dasharray="1,1"/>
<line x1="1303.5" y1="689" x2="1303.5" y2="731" stroke="#6a6a6a" stroke-width="1" stroke-dasharray="1,1"/>
<line x1="1313.5" y1="689" x2="1313.5" y2="731" stroke="#6a6a6a" stroke-width="1" stroke-dasharray="1,1"/>
<line x1="1323.5" y1="689" x2="1323.5" y2="731" stroke="#6a6a6a" stroke-width="1" stroke-dasharray="1,1"/>
<line x1="1333.5" y1="689" x2="1333.5" y2="731" stroke="#6a6a6a" stroke-width="1" stroke-dasharray="1,1"/>
<line x1="1343.5" y1="689" x2="1343.5" y2="731" stroke="#6a6a6a" stroke-width="1" stroke-dasharray="1,1"/>
<line x1="1353.5" y1="689" x2="1353.5" y2="731" stroke="#6a6a6a" stroke-width="1" stroke-dasharray="1,1"/>
<line x1="1363.5" y1="689" x2="1363.5" y2="731" stroke="#6a6a6a" stroke-width="1" stroke-dasharray="1,1"/>
<line x1="1373.5" y1="689" x2="1373.5" y2="731" stroke="#6a6a6a" stroke-width="1" stroke-dasharray="1,1"/>
<line x1="1383.5" y1="689" x2="1383.5" y2="731" stroke="#6a6a6a" stroke-width="1" stroke-dasharray="1,1"/>
<line x1="1393.5" y1="689" x2="1393.5" y2="731" stroke="#6a6a6a" stroke-width="1" stroke-dasharray="1,1"/>
<line x1="1403.5" y1="689" x2="1403.5" y2="731" stroke="#6a6a6a" stroke-width="1" stroke-dasharray="1,1"/>
<line x1="1413.5" y1="689" x2="1413.5" y2="731" stroke="#6a6a6a" stroke-width="1" stroke-dasharray="1,1"/>
<line x1="1423.5" y1="689" x2="1423.5" y2="731" stroke="#6a6a6a" stroke-width="1" stroke-dasharray="1,1"/>
<line x1="1433.5" y1="689" x2="1433.5" y2="731" stroke="#6a6a6a" stroke-width="1" stroke-dasharray="1,1"/>
<line x1="1443.5" y1="689" x2="1443.5" y2="731" stroke="#6a6a6a" stroke-width="1" stroke-dasharray="1,1"/>
<line x1="1453.5" y1="689" x2="1453.5" y2="731" stroke="#6a6a6a" stroke-width="1" stroke-dasharray="1,1"/>
<line x1="1463.5" y1="689" x2="1463.5" y2="731" stroke="#6a6a6a" stroke-width="1" stroke-dasharray="1,1"/>
<line x1="1473.5" y1="689" x2="1473.5" y2="731" stroke="#6a6a6a" stroke-width="1" stroke-dasharray="1,1"/>
</g>
<rect x="38" y="742" width="10" height="113" fill="#ffd700"/>
<rect x="58" y="742" width="10" height="113" fill="#ffd700"/>
<rect x="648" y="742" width="10" height="113" fill="#ffd700"/>
<rect x="678" y="742" width="10" height="113" fill="#ffd700"/>
<rect x="708" y="742" width="10" height="113" fill="#ffd700"/>
<rect x="718" y="742" width="10" height="113" fill="#ffd700"/>
<rect x="748" y="742" width="10" height="113" fill="#ffd700"/>
<rect x="778" y="742" width="10" height="113" fill="#ffd700"/>
<rect x="788" y="742" width="10" height="113" fill="#ffd700"/>
<rect x="838" y="742" width="10" height="113" fill="#ffd700"/>
<rect x="878" y="742" width="10" height="113" fill="#ffd700"/>
<rect x="1028" y="742" width="10" height="113" fill="#ffd700"/>
<rect x="1098" y="742" width="10" height="113" fill="#ffd700"/>
<rect x="1118" y="742" width="10" height="113" fill="#ffd700"/>
<rect x="1148" y="742" width="10" height="113" fill="#ffd700"/>
<rect x="1188" y="742" width="10" height="113" fill="#ffd700"/>
<rect x="1208" y="742" width="10" height="113" fill="#ffd700"/>
<rect x="1288" y="742" width="10" height="113" fill="#ffd700"/>
<rect x="1388" y="742" width="10" height="113" fill="#ffd700"/>
<rect x="1398" y="742" width="10" height="113" fill="#ffd700"/>
<rect x="1418" y="742" width="10" height="113" fill="#ffd700"/>
<rect x="1428" y="742" width="10" height="113" fill="#ffd700"/>
<rect x="1438" y="742" width="10" height="113" fill="#ffd700"/>
<rect x="1458" y="742" width="10" height="113" fill="#ffd700"/>
<rect x="8" y="761" width="1482" height="1" fill="#e4e4e4"/>
<rect x="8" y="844" width="1482" height="1" fill="#e4e4e4"/>
<rect x="23" y="742" width="1" height="113" fill="#e4e4e4" opacity="0.9"/>
<rect x="83" y="742" width="1" height="113" fill="#e4e4e4" opacity="0.9"/>
<rect x="143" y="742" width="1" height="113" fill="#e4e4e4" opacity="0.9"/>
<rect x="203" y="742" width="1" height="113" fill="#e4e4e4" opacity="0.9"/>
<rect x="263" y="742" width="1" height="113" fill="#e4e4e4" opacity="0.9"/>
<rect x="323" y="742" width="1" height="113" fill="#e4e4e4" opacity="0.9"/>
<rect x="383" y="742" width="1" height="113" fill="#e4e4e4" opacity="0.9"/>
<rect x="443" y="742" width="1" height="113" fill="#e4e4e4" opacity="0.9"/>
<rect x="503" y="742" width="1" height="113" fill="#e4e4e4" opacity="0.9"/>
<rect x="563" y="742" width="1" height="113" fill="#e4e4e4" opacity="0.9"/>
<rect x="623" y="742" width="1" height="113" fill="#e4e4e4" opacity="0.9"/>
<rect x="683" y="742" width="1" height="113" fill="#e4e4e4" opacity="0.9"/>
<rect x="743" y="742" width="1" height="113" fill="#e4e4e4" opacity="0.9"/>
<rect x="803" y="742" width="1" height="113" fill="#e4e4e4" opacity="0.9"/>
<rect x="863" y="742" width="1" height="113" fill="#e4e4e4" opacity="0.9"/>
<rect x="923" y="742" width="1" height="113" fill="#e4e4e4" opacity="0.9"/>
<rect x="983" y="742" width="1" height="113" fill="#e4e4e4" opacity="0.9"/>
<rect x="1043" y="742" width="1" height="113" fill="#e4e4e4" opacity="0.9"/>
<rect x="1103" y="742" width="1" height="113" fill="#e4e4e4" opacity="0.9"/>
<rect x="1163" y="742" width="1" height="113" fill="#e4e4e4" opacity="0.9"/>
<rect x="1223" y="742" width="1" height="113" fill="#e4e4e4" opacity="0.9"/>
<rect x="1283" y="742" width="1" height="113" fill="#e4e4e4" opacity="0.9"/>
<rect x="1343" y="742" width="1" height="113" fill="#e4e4e4" opacity="0.9"/>
<rect x="1403" y="742" width="1" height="113" fill="#e4e4e4" opacity="0.9"/>
<rect x="1463" y="742" width="1" height="113" fill="#e4e4e4" opacity="0.9"/>
<rect x="22" y="787" width="2" height="57" fill="#0000ff"/>
<rect x="32" y="789" width="2" height="55" fill="#0000ff"/>
<rect x="42" y="783" width="2" height="61" fill="#0000ff"/>
<rect x="52" y="788" width="2" height="56" fill="#0000ff"/>
<rect x="62" y="785" width="2" height="59" fill="#0000ff"/>
<rect x="72" y="787" width="2" height="57" fill="#0000ff"/>
<rect x="662" y="791" width="2" height="53" fill="#0000ff"/>
<rect x="672" y="787" width="2" height="57" fill="#0000ff"/>
<rect x="682" y="782" width="2" height="62" fill="#0000ff"/>
<rect x="692" y="793" width="2" height="51" fill="#0000ff"/>
<rect x="702" y="785" width="2" height="59" fill="#0000ff"/>
<rect x="712" y="785" width="2" height="59" fill="#0000ff"/>
<rect x="722" y="783" width="2" height="61" fill="#0000ff"/>
<rect x="732" y="790" width="2" height="54" fill="#0000ff"/>
<rect x="742" y="792" width="2" height="52" fill="#0000ff"/>
<rect x="752" y="780" width="2" height="64" fill="#0000ff"/>
<rect x="762" y="784" width="2" height="60" fill="#0000ff"/>
<rect x="772" y="786" width="2" height="58" fill="#0000ff"/>
<rect x="782" y="780" width="2" height="64" fill="#0000ff"/>
<rect x="792" y="774" width="2" height="70" fill="#0000ff"/>
<rect x="802" y="793" width="2" height="51" fill="#0000ff"/>
<rect x="812" y="788" width="2" height="56" fill="#0000ff"/>
<rect x="822" y="793" width="2" height="51" fill="#0000ff"/>
<rect x="832" y="793" width="2" height="51" fill="#0000ff"/>
<rect x="842" y="752" width="2" height="92" fill="#0000ff"/>
<rect x="852" y="794" width="2" height="50" fill="#0000ff"/>
<rect x="862" y="801" width="2" height="43" fill="#0000ff"/>
<rect x="872" y="791" width="2" height="53" fill="#0000ff"/>
<rect x="882" y="771" width="2" height="73" fill="#0000ff"/>
<rect x="892" y="792" width="2" height="52" fill="#0000ff"/>
<rect x="902" y="786" width="2" height="58" fill="#0000ff"/>
<rect x="912" y="795" width="2" height="49" fill="#0000ff"/>
<rect x="922" y="790" width="2" height="54" fill="#0000ff"/>
<rect x="932" y="795" width="2" height="49" fill="#0000ff"/>
<rect x="942" y="798" width="2" height="46" fill="#0000ff"/>
<rect x="952" y="795" width="2" height="49" fill="#0000ff"/>
<rect x="962" y="792" width="2" height="52" fill="#0000ff"/>
<rect x="972" y="793" width="2" height="51" fill="#0000ff"/>
<rect x="982" y="797" width="2" height="47" fill="#0000ff"/>
<rect x="992" y="789" width="2" height="55" fill="#0000ff"/>
<rect x="1002" y="793" width="2" height="51" fill="#0000ff"/>
<rect x="1012" y="793" width="2" height="51" fill="#0000ff"/>
<rect x="1022" y="801" width="2" height="43" fill="#0000ff"/>
<rect x="1032" y="780" width="2" height="64" fill="#0000ff"/>
<rect x="1042" y="790" width="2" height="54" fill="#0000ff"/>
<rect x="1052" y="791" width="2" height="53" fill="#0000ff"/>
<rect x="1062" y="793" width="2" height="51" fill="#0000ff"/>
<rect x="1072" y="790" width="2" height="54" fill="#0000ff"/>
<rect x="1082" y="793" width="2" height="51" fill="#0000ff"/>
<rect x="1092" y="793" width="2" height="51" fill="#0000ff"/>
<rect x="1102" y="788" width="2" height="56" fill="#0000ff"/>
<rect x="1112" y="790" width="2" height="54" fill="#0000ff"/>
<rect x="1122" y="784" width="2" height="60" fill="#0000ff"/>
<rect x="1132" y="790" width="2" height="54" fill="#0000ff"/>
<rect x="1142" y="793" width="2" height="51" fill="#0000ff"/>
<rect x="1152" y="787" width="2" height="57" fill="#0000ff"/>
<rect x="1162" y="796" width="2" height="48" fill="#0000ff"/>
<rect x="1172" y="798" width="2" height="46" fill="#0000ff"/>
<rect x="1182" y="796" width="2" height="48" fill="#0000ff"/>
<rect x="1192" y="782" width="2" height="62" fill="#0000ff"/>
<rect x="1202" y="795" width="2" height="49" fill="#0000ff"/>
<rect x="1212" y="777" width="2" height="67" fill="#0000ff"/>
<rect x="1222" y="780" width="2" height="64" fill="#0000ff"/>
<rect x="1232" y="800" width="2" height="44" fill="#0000ff"/>
<rect x="1242" y="800" width="2" height="44" fill="#0000ff"/>
<rect x="1252" y="800" width="2" height="44" fill="#0000ff"/>
<rect x="1262" y="797" width="2" height="47" fill="#0000ff"/>
<rect x="1272" y="797" width="2" height="47" fill="#0000ff"/>
<rect x="1282" y="795" width="2" height="49" fill="#0000ff"/>
<rect x="1292" y="782" width="2" height="62" fill="#0000ff"/>
<rect x="1302" y="798" width="2" height="46" fill="#0000ff"/>
<rect x="1312" y="795" width="2" height="49" fill="#0000ff"/>
<rect x="1322" y="794" width="2" height="50" fill="#0000ff"/>
<rect x="1332" y="795" width="2" height="49" fill="#0000ff"/>
<rect x="1342" y="798" width="2" height="46" fill="#0000ff"/>
<rect x="1352" y="794" width="2" height="50" fill="#0000ff"/>
<rect x="1362" y="794" width="2" height="50" fill="#0000ff"/>
<rect x="1372" y="793" width="2" height="51" fill="#0000ff"/>
<rect x="1382" y="792" width="2" height="52" fill="#0000ff"/>
<rect x="1392" y="783" width="2" height="61" fill="#0000ff"/>
<rect x="1402" y="775" width="2" height="69" fill="#0000ff"/>
<rect x="1412" y="790" width="2" height="54" fill="#0000ff"/>
<rect x="1422" y="787" width="2" height="57" fill="#0000ff"/>
<rect x="1432" y="782" width="2" height="62" fill="#0000ff"/>
<rect x="1442" y="781" width="2" height="63" fill="#0000ff"/>
<rect x="1452" y="785" width="2" height="59" fill="#0000ff"/>
<rect x="1462" y="778" width="2" height="66" fill="#0000ff"/>
<rect x="1472" y="782" width="2" height="62" fill="#0000ff"/>
<rect x="1482" y="806" width="2" height="38" fill="#0000ff"/>
<polyline points="23,787 73,787 650,787.4 793,786 847,784.7 883,787.4 923,786.8 963,788.7 993,790 1033,791.4 1063,791.3 1123,790.6 1183,790 1223,789.2 1273,791.1 1313,792 1343,793.1 1373,793.9 1393,792.5 1423,791.1 1453,789.2 1483,788.3" stroke="#000" stroke-width="2.5" fill="none" shape-rendering="auto" stroke-linejoin="round"/>
<polyline points="23,787 33,788 43,786 53,787 63,786 73,787 83,787 653,787 663,787.4 673,788.7 683,786.8 693,788.2 713,786 723,785.5 733,787.4 743,788.2 763,785.5 783,783.4 793,780.2 803,785.5 823,787.4 833,790 843,778 853,783.4 863,789.5 873,790 883,782.8 893,786.8 903,786.8 913,789.5 923,790 933,792.2 943,794 953,794 963,793 973,793.5 983,794.6 993,793 1013,793 1023,796.2 1033,790 1043,790.8 1053,791.4 1063,792 1083,790.6 1103,791.1 1123,788.3 1143,789.7 1153,789.2 1173,793.4 1183,794.8 1193,789.2 1203,792 1213,786.9 1223,786.1 1233,791.1 1253,795.3 1273,796.7 1283,795.3 1293,791.1 1303,793.9 1343,795.3 1373,795.3 1383,792.5 1393,788.3 1403,784.1 1413,786.9 1423,787.8 1433,785.5 1443,784.1 1453,783.6 1463,782.2 1473,782.7 1483,789.7" stroke="#ffa500" stroke-width="2" fill="none" shape-rendering="auto" stroke-linejoin="round"/>
<rect x="8" y="909" width="1482" height="1" fill="#000"/>
<polyline points="23,910 33,901 43,904 53,904.5 63,904 73,901 83,905" stroke="#0000ff" stroke-width="2.5" fill="none" shape-rendering="auto" stroke-linejoin="round"/>
<polyline points="653,911 663,908.4 673,901.7 683,916.4 693,912.4 703,923.8 713,908.4 723,910.5 733,913.7 743,907.8 753,903.6 763,902 773,907 783,907 793,888.4 803,918 813,912.4 823,919.6 833,912 843,864.3 853,924.4 863,927.6 873,915 883,898.2 893,929.2 903,901.7 913,916.4 923,905.2 933,911 943,959.6 953,909.7 963,899.6 973,909.7 983,938.2 993,906.2 1003,916.4 1013,906.2 1023,921.7 1033,892.4 1043,899.6 1053,904.4 1063,910.5 1073,906.2 1083,904.5 1093,913.7 1103,904.5 1113,905.3 1123,890 1133,920.7 1143,912.3 1153,904.5 1163,910.9 1173,917.3 1183,912.3 1193,897.5 1203,916.5 1213,894.1 1223,905.3 1233,919.9 1243,917.3 1253,923.5 1263,910.4 1273,908.1 1283,907.3 1293,908.1 1303,912.3 1313,928.2 1323,922.9 1333,903.4 1343,906.2 1353,902.5 1363,907.3 1373,905.3 1383,905.3 1393,910.9 1403,882.4 1413,904.5 1423,901.1 1433,894.7 1443,891.3 1453,899.2 1463,890.5 1473,896.4 1483,923.5" stroke="#0000ff" stroke-width="2.5" fill="none" shape-rendering="auto" stroke-linejoin="round"/>
<rect x="8" y="1020" width="1482" height="2" fill="#000"/>
<rect x="22" y="992" width="2" height="28" fill="#0000ff"/>
<rect x="32" y="999" width="2" height="21" fill="#0000ff"/>
<rect x="42" y="992" width="2" height="28" fill="#0000ff"/>
<rect x="52" y="999" width="2" height="21" fill="#0000ff"/>
<rect x="62" y="1006" width="2" height="14" fill="#0000ff"/>
<rect x="72" y="1022" width="2" height="1" fill="#0000ff"/>
<rect x="662" y="1015" width="2" height="5" fill="#0000ff"/>
<rect x="672" y="1009" width="2" height="11" fill="#0000ff"/>
<rect x="682" y="1018" width="2" height="2" fill="#0000ff"/>
<rect x="692" y="1012" width="2" height="8" fill="#0000ff"/>
<rect x="712" y="1022" width="2" height="1" fill="#0000ff"/>
<rect x="722" y="1022" width="2" height="5" fill="#0000ff"/>
<rect x="732" y="1022" width="2" height="3" fill="#0000ff"/>
<rect x="742" y="1019" width="2" height="1" fill="#0000ff"/>
<rect x="762" y="1022" width="2" height="2" fill="#0000ff"/>
<rect x="772" y="1022" width="2" height="1" fill="#0000ff"/>
<rect x="782" y="1022" width="2" height="6" fill="#0000ff"/>
<rect x="792" y="1022" width="2" height="3" fill="#0000ff"/>
<rect x="802" y="1022" width="2" height="3" fill="#0000ff"/>
<rect x="812" y="1022" width="2" height="3" fill="#0000ff"/>
<rect x="822" y="1022" width="2" height="2" fill="#0000ff"/>
<rect x="842" y="1019" width="2" height="1" fill="#0000ff"/>
<rect x="852" y="1022" width="2" height="3" fill="#0000ff"/>
<rect x="862" y="1022" width="2" height="8" fill="#0000ff"/>
<rect x="872" y="1022" width="2" height="15" fill="#0000ff"/>
<rect x="892" y="1019" width="2" height="1" fill="#0000ff"/>
<rect x="902" y="1019" width="2" height="1" fill="#0000ff"/>
<rect x="912" y="1012" width="2" height="8" fill="#0000ff"/>
<rect x="922" y="1011" width="2" height="9" fill="#0000ff"/>
<rect x="932" y="1006" width="2" height="14" fill="#0000ff"/>
<rect x="942" y="982" width="2" height="38" fill="#0000ff"/>
<rect x="952" y="981" width="2" height="39" fill="#0000ff"/>
<rect x="962" y="979" width="2" height="41" fill="#0000ff"/>
<rect x="972" y="979" width="2" height="41" fill="#0000ff"/>
<rect x="982" y="1011" width="2" height="9" fill="#0000ff"/>
<rect x="992" y="1009" width="2" height="11" fill="#0000ff"/>
<rect x="1002" y="1013" width="2" height="7" fill="#0000ff"/>
<rect x="1012" y="1013" width="2" height="7" fill="#0000ff"/>
<rect x="1022" y="1016" width="2" height="4" fill="#0000ff"/>
<rect x="1032" y="999" width="2" height="21" fill="#0000ff"/>
<rect x="1042" y="1007" width="2" height="13" fill="#0000ff"/>
<rect x="1052" y="1009" width="2" height="11" fill="#0000ff"/>
<rect x="1062" y="1009" width="2" height="11" fill="#0000ff"/>
<rect x="1072" y="1009" width="2" height="11" fill="#0000ff"/>
<rect x="1082" y="1019" width="2" height="1" fill="#0000ff"/>
<rect x="1092" y="1017" width="2" height="3" fill="#0000ff"/>
<rect x="1102" y="1016" width="2" height="4" fill="#0000ff"/>
<rect x="1112" y="1016" width="2" height="4" fill="#0000ff"/>
<rect x="1132" y="1015" width="2" height="5" fill="#0000ff"/>
<rect x="1142" y="1012" width="2" height="8" fill="#0000ff"/>
<rect x="1162" y="1016" width="2" height="4" fill="#0000ff"/>
<rect x="1172" y="1018" width="2" height="2" fill="#0000ff"/>
<rect x="1182" y="1022" width="2" height="3" fill="#0000ff"/>
<rect x="1192" y="1018" width="2" height="2" fill="#0000ff"/>
<rect x="1212" y="1018" width="2" height="2" fill="#0000ff"/>
<rect x="1222" y="1022" width="2" height="6" fill="#0000ff"/>
<rect x="1232" y="1022" width="2" height="10" fill="#0000ff"/>
<rect x="1242" y="1022" width="2" height="17" fill="#0000ff"/>
<rect x="1252" y="1022" width="2" height="12" fill="#0000ff"/>
<rect x="1262" y="1022" width="2" height="14" fill="#0000ff"/>
<rect x="1272" y="1022" width="2" height="10" fill="#0000ff"/>
<rect x="1282" y="1022" width="2" height="5" fill="#0000ff"/>
<rect x="1292" y="1022" width="2" height="33" fill="#0000ff"/>
<rect x="1302" y="1022" width="2" height="22" fill="#0000ff"/>
<rect x="1312" y="1022" width="2" height="33" fill="#0000ff"/>
<rect x="1322" y="1022" width="2" height="33" fill="#0000ff"/>
<rect x="1332" y="1022" width="2" height="28" fill="#0000ff"/>
<rect x="1342" y="1022" width="2" height="15" fill="#0000ff"/>
<rect x="1352" y="1022" width="2" height="6" fill="#0000ff"/>
<rect x="1362" y="1022" width="2" height="1" fill="#0000ff"/>
<rect x="1382" y="1019" width="2" height="1" fill="#0000ff"/>
<rect x="1392" y="1014" width="2" height="6" fill="#0000ff"/>
<rect x="1402" y="1011" width="2" height="9" fill="#0000ff"/>
<rect x="1412" y="1013" width="2" height="7" fill="#0000ff"/>
<rect x="1422" y="1016" width="2" height="4" fill="#0000ff"/>
<rect x="1432" y="1016" width="2" height="4" fill="#0000ff"/>
<rect x="1442" y="1022" width="2" height="3" fill="#0000ff"/>
<rect x="1452" y="1022" width="2" height="9" fill="#0000ff"/>
<rect x="1462" y="1022" width="2" height="15" fill="#0000ff"/>
<rect x="1472" y="1022" width="2" height="12" fill="#0000ff"/>
<rect x="1482" y="1007" width="2" height="13" fill="#0000ff"/>
<polyline points="23,998.8 40,998.5 60,995 75,996 650,1026 673,1024 683,1023.5 703,1021.4 723,1020 749,1019.2 763,1020.8 803,1021.4 824,1023.2 853,1024 874,1026.7 904,1025 914,1023.2 933,1021.4 953,1013.4 973,1001.4 993,999.5 1013,997.9 1023,999.5 1033,998.2 1053,1002.7 1063,1005.7 1083,1010 1103,1011 1123,1012.2 1143,1014 1173,1016 1203,1018.3 1223,1020.6 1243,1023.4 1263,1027.3 1283,1029.5 1303,1035 1323,1041.2 1343,1043.5 1363,1041.5 1383,1039.3 1403,1032.3 1423,1023.9 1443,1019.2 1463,1020.3 1473,1021 1483,1019.7" stroke="#000" stroke-width="2.5" fill="none" shape-rendering="auto" stroke-linejoin="round"/>
<polyline points="23,993.7 50,994 70,997 77,1000 650,1026.7 673,1020 693,1016 703,1015.2 723,1018.7 744,1023.2 783,1023.5 803,1025.4 824,1026.2 844,1023.5 853,1022.7 874,1026.2 904,1025.4 924,1018.7 934,1014.7 944,1005.4 954,997.3 974,986.1 984,986.7 1004,999.5 1024,1012.8 1034,1010.2 1044,1010.2 1054,1009.5 1063,1009.4 1073,1008 1093,1012.7 1113,1014.1 1133,1017 1153,1016.5 1173,1017.8 1193,1019.7 1213,1019.7 1233,1022.5 1253,1029.5 1273,1035 1283,1034.5 1303,1037.9 1323,1044.9 1333,1051.9 1353,1046.3 1373,1035 1393,1023.9 1413,1018.3 1423,1013.6 1433,1013.6 1443,1017 1453,1022.5 1473,1028.1 1483,1027.3" stroke="#ffa500" stroke-width="2" fill="none" shape-rendering="auto" stroke-linejoin="round"/>
<rect x="8" y="504" width="1482" height="2" fill="#000"/>
<rect x="23" y="615" width="1462" height="2" fill="#000"/>
<rect x="8" y="399" width="1558" height="1" fill="#000"/>
<rect x="8" y="513" width="1558" height="1" fill="#000"/>
<rect x="8" y="627" width="1558" height="1" fill="#000"/>
<rect x="8" y="741" width="1558" height="1" fill="#000"/>
<rect x="8" y="855" width="1558" height="1" fill="#000"/>
<rect x="8" y="969" width="1558" height="1" fill="#000"/>
<rect x="1490" y="61" width="1" height="1002" fill="#000"/>
<rect x="8" y="1062" width="1483" height="1" fill="#000"/>
<g shape-rendering="auto">
<rect x="1491" y="95" width="6" height="1" fill="#000"/><text x="1498" y="100" font-size="11" font-family="Liberation Sans" fill="#000">60,00</text>
<rect x="1491" y="138" width="6" height="1" fill="#000"/><text x="1498" y="143" font-size="11" font-family="Liberation Sans" fill="#000">59,95</text>
<rect x="1491" y="180" width="6" height="1" fill="#000"/><text x="1498" y="185" font-size="11" font-family="Liberation Sans" fill="#000">59,90</text>
<rect x="1491" y="223" width="6" height="1" fill="#000"/><text x="1498" y="228" font-size="11" font-family="Liberation Sans" fill="#000">59,85</text>
<rect x="1491" y="265" width="6" height="1" fill="#000"/><text x="1498" y="270" font-size="11" font-family="Liberation Sans" fill="#000">59,80</text>
<rect x="1491" y="350" width="6" height="1" fill="#000"/><text x="1498" y="355" font-size="11" font-family="Liberation Sans" fill="#000">59,70</text>
<rect x="1491" y="393" width="6" height="1" fill="#000"/><text x="1498" y="398" font-size="11" font-family="Liberation Sans" fill="#000">59,65</text>
<rect x="1491" y="308" width="6" height="1" fill="#000"/><text x="1498" y="313" font-size="11" font-family="Liberation Sans" fill="#000"></text>
<rect x="1491" y="407" width="6" height="1" fill="#000"/><text x="1498" y="412" font-size="11" font-family="Liberation Sans" fill="#000">1</text>
<rect x="1491" y="456" width="6" height="1" fill="#000"/><text x="1498" y="461" font-size="11" font-family="Liberation Sans" fill="#000">0,5</text>
<rect x="1491" y="505" width="6" height="1" fill="#000"/><text x="1498" y="510" font-size="11" font-family="Liberation Sans" fill="#000">0</text>
<rect x="1491" y="730" width="6" height="1" fill="#000"/><text x="1498" y="735" font-size="11" font-family="Liberation Sans" fill="#000">0</text>
<rect x="1491" y="761" width="6" height="1" fill="#000"/><text x="1498" y="766" font-size="11" font-family="Liberation Sans" fill="#000">300</text>
<rect x="1491" y="817" width="6" height="1" fill="#000"/><text x="1498" y="822" font-size="11" font-family="Liberation Sans" fill="#000">100</text>
<rect x="1491" y="844" width="6" height="1" fill="#000"/><text x="1498" y="849" font-size="11" font-family="Liberation Sans" fill="#000">0</text>
<rect x="1491" y="879" width="6" height="1" fill="#000"/><text x="1498" y="884" font-size="11" font-family="Liberation Sans" fill="#000">100</text>
<rect x="1491" y="909" width="6" height="1" fill="#000"/><text x="1498" y="914" font-size="11" font-family="Liberation Sans" fill="#000">0</text>
<rect x="1491" y="938" width="6" height="1" fill="#000"/><text x="1498" y="943" font-size="11" font-family="Liberation Sans" fill="#000">-100</text>
<rect x="1491" y="974" width="6" height="1" fill="#000"/><text x="1498" y="979" font-size="11" font-family="Liberation Sans" fill="#000">0,004</text>
<rect x="1491" y="998" width="6" height="1" fill="#000"/><text x="1498" y="1003" font-size="11" font-family="Liberation Sans" fill="#000">0,002</text>
<rect x="1491" y="1045" width="6" height="1" fill="#000"/><text x="1498" y="1050" font-size="11" font-family="Liberation Sans" fill="#000">-0,002</text>
<text x="1497" y="635" font-size="11" fill="#555">288K</text>
</g>
<g shape-rendering="auto">
<path d="M1491,308 L1497,301.5 H1527 V314.5 H1497 Z" fill="#000" stroke="#000" stroke-width="1" shape-rendering="auto"/><text x="1498.5" y="312" font-size="11" fill="#fff" font-family="Liberation Sans">59,75</text>
<path d="M1491,616 L1497,609.5 H1506 V622.5 H1497 Z" fill="#000" stroke="#000" stroke-width="1" shape-rendering="auto"/><text x="1498.5" y="620" font-size="11" fill="#fff" font-family="Liberation Sans">0</text>
<path d="M1491,667 L1497,660.5 H1525 V673.5 H1497 Z" fill="#a9a9a9" stroke="#000" stroke-width="1" shape-rendering="auto"/><text x="1498.5" y="671" font-size="11" fill="#000" font-family="Liberation Sans">194K</text>
<path d="M1491,638 L1497,631.5 H1525 V644.5 H1497 Z" fill="#0000ff" stroke="#000" stroke-width="1" shape-rendering="auto"/><text x="1498.5" y="642" font-size="11" fill="#fff" font-family="Liberation Sans">282K</text>
<path d="M1491,662 L1497,655.5 H1525 V668.5 H1497 Z" fill="#ffa500" stroke="#000" stroke-width="1" shape-rendering="auto"/><text x="1498.5" y="666" font-size="11" fill="#000" font-family="Liberation Sans">209K</text>
<path d="M1491,677 L1497,670.5 H1525 V683.5 H1497 Z" fill="#0000ff" stroke="#000" stroke-width="1" shape-rendering="auto"/><text x="1498.5" y="681" font-size="11" fill="#fff" font-family="Liberation Sans">161K</text>
<path d="M1491,688 L1497,681.5 H1525 V694.5 H1497 Z" fill="#000" stroke="#000" stroke-width="1" shape-rendering="auto"/><text x="1498.5" y="692" font-size="11" fill="#fff" font-family="Liberation Sans">129K</text>
<path d="M1491,699 L1497,692.5 H1545 V705.5 H1497 Z" fill="#0000ff" stroke="#000" stroke-width="1" shape-rendering="auto"/><text x="1498.5" y="703" font-size="11" fill="#fff" font-family="Liberation Sans">97045,88</text>
<path d="M1491,709.5 L1497,703.0 H1545 V716.0 H1497 Z" fill="#a9a9a9" stroke="#000" stroke-width="1" shape-rendering="auto"/><text x="1498.5" y="713.5" font-size="11" fill="#000" font-family="Liberation Sans">64697,25</text>
<path d="M1491,720 L1497,713.5 H1545 V726.5 H1497 Z" fill="#ff0000" stroke="#000" stroke-width="1" shape-rendering="auto"/><text x="1498.5" y="724" font-size="11" fill="#fff" font-family="Liberation Sans">32348,63</text>
<path d="M1491,790 L1497,783.5 H1533 V796.5 H1497 Z" fill="#ffa500" stroke="#000" stroke-width="1" shape-rendering="auto"/><text x="1498.5" y="794" font-size="11" fill="#fff" font-family="Liberation Sans"></text>
<path d="M1491,788 L1497,781.5 H1533 V794.5 H1497 Z" fill="#000" stroke="#000" stroke-width="1" shape-rendering="auto"/><text x="1498.5" y="792" font-size="11" fill="#fff" font-family="Liberation Sans">201,91</text>
<path d="M1491,806 L1497,799.5 H1519 V812.5 H1497 Z" fill="#0000ff" stroke="#000" stroke-width="1" shape-rendering="auto"/><text x="1498.5" y="810" font-size="11" fill="#fff" font-family="Liberation Sans">137</text>
<path d="M1491,924 L1497,917.5 H1518 V930.5 H1497 Z" fill="#0000ff" stroke="#000" stroke-width="1" shape-rendering="auto"/><text x="1498.5" y="928" font-size="11" fill="#fff" font-family="Liberation Sans">-52</text>
<path d="M1491,1027 L1497,1020.5 H1547 V1033.5 H1497 Z" fill="#ffa500" stroke="#000" stroke-width="1" shape-rendering="auto"/><text x="1498.5" y="1031" font-size="11" fill="#000" font-family="Liberation Sans">-0,000505</text>
<path d="M1491,1007 L1497,1000.5 H1539 V1013.5 H1497 Z" fill="#0000ff" stroke="#000" stroke-width="1" shape-rendering="auto"/><text x="1498.5" y="1011" font-size="11" fill="#fff" font-family="Liberation Sans">0,00126</text>
<path d="M1491,1020 L1497,1013.5 H1549 V1026.5 H1497 Z" fill="#000" stroke="#000" stroke-width="1" shape-rendering="auto"/><text x="1498.5" y="1024" font-size="11" fill="#fff" font-family="Liberation Sans">0,0000747</text>
</g>
<g shape-rendering="auto">
<rect x="23" y="1063" width="1" height="6" fill="#000" shape-rendering="crispEdges"/>
<text x="22.5" y="1079" font-size="11" text-anchor="middle" fill="#000">21:25</text>
<rect x="83" y="1063" width="1" height="6" fill="#000" shape-rendering="crispEdges"/>
<text x="82.5" y="1079" font-size="11" text-anchor="middle" fill="#000">21:26</text>
<rect x="143" y="1063" width="1" height="6" fill="#000" shape-rendering="crispEdges"/>
<text x="142.5" y="1079" font-size="11" text-anchor="middle" fill="#000">21:27</text>
<rect x="203" y="1063" width="1" height="6" fill="#000" shape-rendering="crispEdges"/>
<text x="202.5" y="1079" font-size="11" text-anchor="middle" fill="#000">21:27</text>
<rect x="263" y="1063" width="1" height="6" fill="#000" shape-rendering="crispEdges"/>
<text x="262.5" y="1079" font-size="11" text-anchor="middle" fill="#000">21:28</text>
<rect x="323" y="1063" width="1" height="6" fill="#000" shape-rendering="crispEdges"/>
<text x="322.5" y="1079" font-size="11" text-anchor="middle" fill="#000">21:28</text>
<rect x="383" y="1063" width="1" height="6" fill="#000" shape-rendering="crispEdges"/>
<text x="382.5" y="1079" font-size="11" text-anchor="middle" fill="#000">21:28</text>
<rect x="443" y="1063" width="1" height="6" fill="#000" shape-rendering="crispEdges"/>
<text x="442.5" y="1079" font-size="11" text-anchor="middle" fill="#000">21:28</text>
<rect x="503" y="1063" width="1" height="6" fill="#000" shape-rendering="crispEdges"/>
<text x="502.5" y="1079" font-size="11" text-anchor="middle" fill="#000">21:28</text>
<rect x="563" y="1063" width="1" height="6" fill="#000" shape-rendering="crispEdges"/>
<text x="562.5" y="1079" font-size="11" text-anchor="middle" fill="#000">21:28</text>
<rect x="623" y="1063" width="1" height="6" fill="#000" shape-rendering="crispEdges"/>
<text x="622.5" y="1079" font-size="11" text-anchor="middle" fill="#000">21:28</text>
<rect x="683" y="1063" width="1" height="6" fill="#000" shape-rendering="crispEdges"/>
<text x="682.5" y="1079" font-size="11" text-anchor="middle" fill="#000">21:29</text>
<rect x="743" y="1063" width="1" height="6" fill="#000" shape-rendering="crispEdges"/>
<text x="742.5" y="1079" font-size="11" text-anchor="middle" fill="#000">21:29</text>
<rect x="803" y="1063" width="1" height="6" fill="#000" shape-rendering="crispEdges"/>
<text x="802.5" y="1079" font-size="11" text-anchor="middle" fill="#000">21:30</text>
<rect x="863" y="1063" width="1" height="6" fill="#000" shape-rendering="crispEdges"/>
<text x="862.5" y="1079" font-size="11" text-anchor="middle" fill="#000">21:31</text>
<rect x="923" y="1063" width="1" height="6" fill="#000" shape-rendering="crispEdges"/>
<text x="922.5" y="1079" font-size="11" text-anchor="middle" fill="#000">21:34</text>
<rect x="983" y="1063" width="1" height="6" fill="#000" shape-rendering="crispEdges"/>
<text x="982.5" y="1079" font-size="11" text-anchor="middle" fill="#000">21:39</text>
<rect x="1043" y="1063" width="1" height="6" fill="#000" shape-rendering="crispEdges"/>
<text x="1042.5" y="1079" font-size="11" text-anchor="middle" fill="#000">21:46</text>
<rect x="1103" y="1063" width="1" height="6" fill="#000" shape-rendering="crispEdges"/>
<text x="1102.5" y="1079" font-size="11" text-anchor="middle" fill="#000">21:56</text>
<rect x="1163" y="1063" width="1" height="6" fill="#000" shape-rendering="crispEdges"/>
<text x="1162.5" y="1079" font-size="11" text-anchor="middle" fill="#000">21:59</text>
<rect x="1223" y="1063" width="1" height="6" fill="#000" shape-rendering="crispEdges"/>
<text x="1222.5" y="1079" font-size="11" text-anchor="middle" fill="#000">22:08</text>
<rect x="1283" y="1063" width="1" height="6" fill="#000" shape-rendering="crispEdges"/>
<text x="1282.5" y="1079" font-size="11" text-anchor="middle" fill="#000">22:21</text>
<rect x="1343" y="1063" width="1" height="6" fill="#000" shape-rendering="crispEdges"/>
<text x="1342.5" y="1079" font-size="11" text-anchor="middle" fill="#000">22:33</text>
<rect x="1403" y="1063" width="1" height="6" fill="#000" shape-rendering="crispEdges"/>
<text x="1402.5" y="1079" font-size="11" text-anchor="middle" fill="#000">22:55</text>
<rect x="1463" y="1063" width="1" height="6" fill="#000" shape-rendering="crispEdges"/>
<text x="1462.5" y="1079" font-size="11" text-anchor="middle" fill="#000">23:29</text>
<text x="11" y="1060" font-size="11" fill="#000">&#169; 2015 NinjaTrader, LLC</text>
<text x="11" y="421" font-size="11" fill="#000">MT Volume Current Bid Ask</text>
<text x="11" y="535" font-size="11" fill="#000">MT Volume Delta Analyis</text>
<text x="11" y="649" font-size="11" fill="#000">MT Volume Grid HTF</text>
<text x="11" y="763" font-size="11" fill="#000">MT Volume Increase</text>
<text x="11" y="877" font-size="11" fill="#000">MT Volume Momentum</text>
<text x="11" y="991" font-size="11" fill="#000">MT Volume PCI</text>
</g>
<defs><filter id="sh" x="-10%" y="-50%" width="120%" height="200%"><feGaussianBlur in="SourceAlpha" stdDeviation="1.6"/><feOffset dx="1" dy="2.5" result="b"/><feComponentTransfer><feFuncA type="linear" slope="0.55"/></feComponentTransfer><feMerge><feMergeNode/><feMergeNode in="SourceGraphic"/></feMerge></filter></defs>
<g shape-rendering="auto" font-family="Liberation Sans" font-style="italic" font-size="19.5" fill="#ff0000" style="paint-order:stroke" stroke="#ffffff" stroke-width="3.2" stroke-linejoin="round" filter="url(#sh)">
<text transform="translate(1126 376) rotate(-12.5)" x="0" y="0" text-anchor="middle" textLength="389" lengthAdjust="spacing" stroke-width="3.2">www.trading-software-collection.com</text>
<text transform="translate(1134.5 405) rotate(-12.5)" x="0" y="0" text-anchor="middle" textLength="443" lengthAdjust="spacing">andreybbrv@gmail.com, Skype: andreybbrv</text>
</g>
<g shape-rendering="auto">
<text x="685" y="20" font-size="14.3" textLength="125" lengthAdjust="spacingAndGlyphs" fill="#1e1e1e">CL 07-15 (150 Tick)</text>
<text x="820.5" y="20" font-size="14" textLength="68.5" lengthAdjust="spacingAndGlyphs" fill="#1e1e1e">17.06.2015</text>
<rect x="11.5" y="8.5" width="13" height="13" fill="#dfe6f2" stroke="#7b8db5" stroke-width="1"/>
<path d="M12 19 L15 14 L18 16 L21 11 L24 10" stroke="#1f5fd0" stroke-width="1.3" fill="none"/>
<path d="M12 15 L15 12 L18 14 L21 10 L24 9" stroke="#2aa02a" stroke-width="1.3" fill="none"/>
<rect x="1425.5" y="0.5" width="33" height="20" fill="#f4f4f4" stroke="#3d8ee6" stroke-width="1"/>
<text x="1442" y="14" font-size="11" text-anchor="middle" fill="#000">L</text>
<rect x="1478" y="12" width="9" height="2" fill="#000" shape-rendering="crispEdges"/>
<rect x="1504.5" y="8" width="9" height="7" fill="none" stroke="#000" stroke-width="1"/>
<rect x="1504" y="7.5" width="10" height="2" fill="#000"/>
<rect x="1522" y="1" width="45" height="20" fill="#c4c4c4"/>
<path d="M1540.5 7 L1547.5 14 M1547.5 7 L1540.5 14" stroke="#fff" stroke-width="1.5"/>
</g>
<g shape-rendering="auto" font-size="11.2">
<path d="M12 36 V52" stroke="#a0a0a0" stroke-width="1.2" stroke-dasharray="1.5,2"/>
<rect x="20" y="36" width="1" height="15" fill="#b8b8b8"/>
<text x="28" y="47" fill="#000">CL 07-15</text>
<path d="M80 42 h6 l-3 3 z" fill="#000"/>
<text x="94.5" y="47" fill="#000">150 Tick</text>
<path d="M143 42 h6 l-3 3 z" fill="#000"/>
<rect x="155" y="36" width="1" height="15" fill="#b8b8b8"/>
<rect x="161" y="37" width="3" height="13" rx="1" fill="#3cc83c" stroke="#222" stroke-width="0.8"/>
<rect x="166" y="37" width="3" height="13" rx="1" fill="#3cc83c" stroke="#222" stroke-width="0.8"/>
<rect x="171" y="37" width="3" height="13" rx="1" fill="#e03030" stroke="#222" stroke-width="0.8"/>
<path d="M178 42 h6 l-3 3 z" fill="#000"/>
<path d="M191 50 L193 45 L202 36 L205 39 L196 48 Z" fill="#f5c400" stroke="#555" stroke-width="0.8"/>
<path d="M207 42 h6 l-3 3 z" fill="#000"/>
<circle cx="227" cy="44" r="4.5" fill="#9cc8f0" stroke="#555" stroke-width="1"/>
<path d="M223.5 47.5 L219 52" stroke="#555" stroke-width="2"/>
<path d="M232 36 h5 M234.5 33.5 v5" stroke="#20b020" stroke-width="2"/>
<circle cx="250" cy="44" r="4.5" fill="#d8d8d8" stroke="#aaa" stroke-width="1"/>
<path d="M246.5 47.5 L242 52" stroke="#aaa" stroke-width="2"/>
<path d="M254 38 h5" stroke="#aaa" stroke-width="1.5"/>
<rect x="265" y="36" width="1" height="15" fill="#b8b8b8"/>
<path d="M272 37 L272 48 L275 45 L278 50 L280 49 L277 44 L281 44 Z" fill="#fff" stroke="#333" stroke-width="0.9"/>
<path d="M287 42 h6 l-3 3 z" fill="#000"/>
<rect x="301.5" y="35.5" width="13" height="15" fill="#f8f8f8" stroke="#555" stroke-width="1"/>
<circle cx="308" cy="43" r="3.5" fill="#9cc8f0" stroke="#555" stroke-width="1"/>
<path d="M305 46 L302 50" stroke="#555" stroke-width="1.5"/>
<rect x="323" y="36" width="1" height="15" fill="#b8b8b8"/>
<rect x="329" y="36" width="8" height="3" fill="#3cc83c"/><rect x="329" y="44" width="8" height="3" fill="#e03030"/><rect x="339" y="38" width="2" height="13" fill="#3cc83c"/><rect x="342" y="44" width="2" height="7" fill="#e03030"/>
<rect x="352.5" y="35.5" width="15" height="15" fill="#ddd" stroke="#555" stroke-width="1"/><rect x="355" y="39" width="2.5" height="9" fill="#3cc83c" stroke="#222" stroke-width="0.6"/><rect x="359" y="37" width="2.5" height="8" fill="#3cc83c" stroke="#222" stroke-width="0.6"/><rect x="363" y="40" width="2.5" height="8" fill="#e03030" stroke="#222" stroke-width="0.6"/>
<rect x="375.5" y="35.5" width="15" height="15" fill="#cfcfcf" stroke="#666" stroke-width="1"/><path d="M377 44 L380 40 L384 43 L389 39" stroke="#3cc83c" stroke-width="1" fill="none"/><path d="M377 46 L381 43 L385 46 L389 43" stroke="#e03030" stroke-width="1" fill="none"/>
<path d="M400.5 35.5 H409 L412.5 39 V50.5 H400.5 Z" fill="#fff" stroke="#666" stroke-width="1"/><text x="402.5" y="48" font-size="11" font-weight="bold" fill="#1a9a1a">$</text>
<rect x="422.5" y="35.5" width="13" height="15" fill="#f4f4ff" stroke="#666" stroke-width="1"/><rect x="424" y="37" width="10" height="3" fill="#6a9ae0"/><rect x="424" y="41" width="3" height="8" fill="#a070e0"/>
</g>
</svg>
<div id="dlg"><div class="t">Indicators</div>
<div class="abs" style="left:549px;top:5px;width:19px;height:19px;background:#c75050;color:#fff;font-size:13px;font-weight:bold;text-align:center;line-height:18px">&#215;</div>
<div id="cli">
<div class="lb" style="left:-1px;top:1px;width:273px;height:240px">
<div class="it" style="top:3px;left:5px">MT Trend Bias Power</div>
<div class="it" style="top:16px;left:5px">MT Trend Dynamic Trend</div>
<div class="it" style="top:29px;left:5px">MT Trend Slope</div>
<div class="it" style="top:42px;left:5px">MT UMA</div>
<div class="it" style="top:55px;left:5px">MT Volume Current Bid Ask</div>
<div class="it" style="top:68px;left:5px">MT Volume Delta Analyis</div>
<div class="it" style="top:81px;left:5px">MT Volume Grid HTF</div>
<div class="it" style="top:94px;left:5px">MT Volume Increase</div>
<div class="it" style="top:107px;left:5px">MT Volume Momentum</div>
<div class="it" style="top:120px;left:5px">MT Volume PCI</div>
<div class="it" style="top:133px;left:5px">MT Volume Power</div>
<div class="it" style="top:146px;left:5px">MT Volume Price Bias</div>
<div class="it" style="top:159px;left:5px">MT Volume Price Bias Power</div>
<div class="it" style="top:172px;left:5px">MT Volume Profile</div>
<div class="it" style="top:185px;left:5px">MT Volume Profile Bias</div>
<div class="it" style="top:198px;left:5px">MT Volume Profile Bias Power</div>
<div class="it" style="top:211px;left:5px">MT Williams ACD</div>
<div class="it" style="top:224px;left:5px">MT ZLEC</div>
<div class="abs" style="left:253px;top:1px;width:17px;height:236px;background:#f0f0f0"></div>
<div class="abs" style="left:254px;top:147px;width:15px;height:17px;background:#cdcdcd"></div>
<svg class="abs" style="left:253px;top:3px" width="17" height="232"><path d="M5 10 L8.5 6.5 L12 10" stroke="#606060" stroke-width="1.5" fill="none"/><path d="M5 223 L8.5 226.5 L12 223" stroke="#606060" stroke-width="1.5" fill="none"/></svg>
</div>
<div class="lb" style="left:1px;top:244px;width:272px;height:134px;border-color:#828282;box-shadow:none">
<div class="it" style="top:1px;left:3px">MT Volume Current Bid Ask</div>
<div class="it" style="top:14px;left:3px">MT Volume Delta Analyis</div>
<div class="it" style="top:27px;left:3px">MT Volume Grid HTF</div>
<div class="it" style="top:40px;left:3px">MT Volume Increase</div>
<div class="it" style="top:53px;left:3px">MT Volume Momentum</div>
<div class="abs" style="left:1px;top:66px;width:267px;height:13px;background:#3399ff"></div>
<div class="it" style="top:66px;left:3px;color:#fff">MT Volume PCI</div>
</div>
<div class="btn" style="left:26px;top:390px;width:66px;height:23px;color:#8c8c8c;border-color:#c8c8c8;background:#f4f4f4">New</div>
<div class="btn" style="left:179px;top:390px;width:66px;height:23px">Remove</div>
<div class="abs" style="left:0;top:420px;width:561px;height:1px;background:#fdfdfd"></div>
<div class="abs" style="left:0px;top:241px;width:1px;height:180px;background:#a0a0a0"></div>
<svg class="abs" style="left:548px;top:474px" width="12" height="12"><g fill="#b4b4b4"><rect x="8" y="2" width="2" height="2"/><rect x="5" y="5" width="2" height="2"/><rect x="8" y="5" width="2" height="2"/><rect x="2" y="8" width="2" height="2"/><rect x="5" y="8" width="2" height="2"/><rect x="8" y="8" width="2" height="2"/></g></svg>
<div class="pg" style="left:280px;top:2px;width:280px;height:357px;border:1px solid #9a9a9a;background:#c4c4c4">
<div class="cat" style="top:1px"><div class="pm"></div><span>Data</span></div>
<div class="row" style="top:17px"><div class="n" style="height:15px;left:0;padding-left:3px;width:116px;top:0;line-height:15px">Calculate on bar close</div><div class="v">False</div></div>
<div class="row" style="top:33px"><div class="n" style="height:15px;left:0;padding-left:3px;width:116px;top:0;line-height:15px">Input series</div><div class="v">CL 07-15 (150 Tick)</div></div>
<div class="row" style="top:49px"><div class="n" style="height:15px;left:0;padding-left:3px;width:116px;top:0;line-height:15px">Maximum bars look back</div><div class="v">TwoHundredFiftySix</div></div>
<div class="cat" style="top:65px"><div class="pm"></div><span>Visual</span></div>
<div class="row" style="top:81px"><div class="n" style="height:15px;left:0;padding-left:3px;width:116px;top:0;line-height:15px">Auto scale</div><div class="v">False</div></div>
<div class="row" style="top:97px"><div class="n" style="height:15px;left:0;padding-left:3px;width:116px;top:0;line-height:15px">Displacement</div><div class="v">0</div></div>
<div class="row" style="top:113px"><div class="n" style="height:15px;left:0;padding-left:3px;width:116px;top:0;line-height:15px">Display in Data Box</div><div class="v">True</div></div>
<div class="row" style="top:129px"><div class="n" style="background:#c4c4c4;height:15px;left:0;padding-left:3px;width:116px;top:0;line-height:15px">Label</div><div class="v">MT Volume PCI</div></div>
<div class="row" style="top:145px"><div class="n" style="height:15px;left:0;padding-left:3px;width:116px;top:0;line-height:15px">Panel</div><div class="v">7</div></div>
<div class="row" style="top:161px"><div class="n" style="height:15px;left:0;padding-left:3px;width:116px;top:0;line-height:15px">Price marker(s)</div><div class="v">True</div></div>
<div class="row" style="top:177px"><div class="n" style="height:15px;left:0;padding-left:3px;width:116px;top:0;line-height:15px">Scale justification</div><div class="v">Right</div></div>
<div class="cat" style="top:193px"><div class="pm"></div><span>Lines</span></div>
<div class="row" style="top:209px"><div class="pm p" style="left:-13px;top:3px"></div><div class="n" style="height:15px;left:0;padding-left:3px;width:116px;top:0;line-height:15px">Zero Line</div><div class="v"><span style="display:inline-block;width:20px;height:11px;border:1px solid #000;vertical-align:-2px;margin-right:8px;background:linear-gradient(#fff 4px,#000 4px,#000 5px,#fff 5px)"></span>0</div></div>
<div class="cat" style="top:225px"><div class="pm"></div><span>MT Zone Setting</span></div>
<div class="row" style="top:241px"><div class="n" style="height:15px;left:0;padding-left:3px;width:116px;top:0;line-height:15px">MT - Zone Setting ID</div><div class="v">0</div></div>
<div class="row" style="top:257px"><div class="n" style="height:15px;left:0;padding-left:3px;width:116px;top:0;line-height:15px">MT - Zone Setting Is Used</div><div class="v">True</div></div>
<div class="row" style="top:273px"><div class="n" style="height:15px;left:0;padding-left:3px;width:116px;top:0;line-height:15px">MT - Zone Setting Load</div><div class="v">Select</div></div>
<div class="row" style="top:289px"><div class="n" style="height:15px;left:0;padding-left:3px;width:116px;top:0;line-height:15px">MT - Zone Setting Load</div><div class="v">Select</div></div>
<div class="row" style="top:305px"><div class="n" style="height:15px;left:0;padding-left:3px;width:116px;top:0;line-height:15px">MT - Zone Setting Name</div><div class="v"></div></div>
<div class="row" style="top:321px"><div class="n" style="height:15px;left:0;padding-left:3px;width:116px;top:0;line-height:15px">MT - Zone Setting Save</div><div class="v">Select</div></div>
<div class="row" style="top:337px"><div class="n" style="height:15px;left:0;padding-left:3px;width:116px;top:0;line-height:15px">MT - Zone Setting Save</div><div class="v">Select</div></div>
<div class="abs" style="left:261px;top:0;width:17px;height:355px;background:#f0f0f0"></div>
<div class="abs" style="left:262px;top:124px;width:15px;height:182px;background:#cdcdcd"></div>
<svg class="abs" style="left:261px;top:0" width="17" height="355"><path d="M5 14 L8.5 10.5 L12 14" stroke="#606060" stroke-width="1.5" fill="none"/><path d="M5 342 L8.5 345.5 L12 342" stroke="#606060" stroke-width="1.5" fill="none"/></svg>
</div>
<div class="abs" style="left:280px;top:361px;width:280px;height:59px;border:1px solid #a8a8a8;background:#ececec;font-size:11px;line-height:13.5px;padding:3px 0 0 4px;white-space:nowrap"><b style="font-size:12px">Label</b><br>MicroTrendsVolumePriceConfirmation v7.0.1.64<br>Copyright&nbsp; 2010,2011,2012,2013,2014&nbsp; MicroTrends...</div>
<div class="btn" style="left:88px;top:451px;width:79px;height:23px">OK</div>
<div class="btn" style="left:241px;top:451px;width:78px;height:23px;border-color:#569de5;background:#e5f1fb">Apply</div>
<div class="btn" style="left:394px;top:451px;width:78px;height:23px">Close</div>
</div></div>
</body></html>
